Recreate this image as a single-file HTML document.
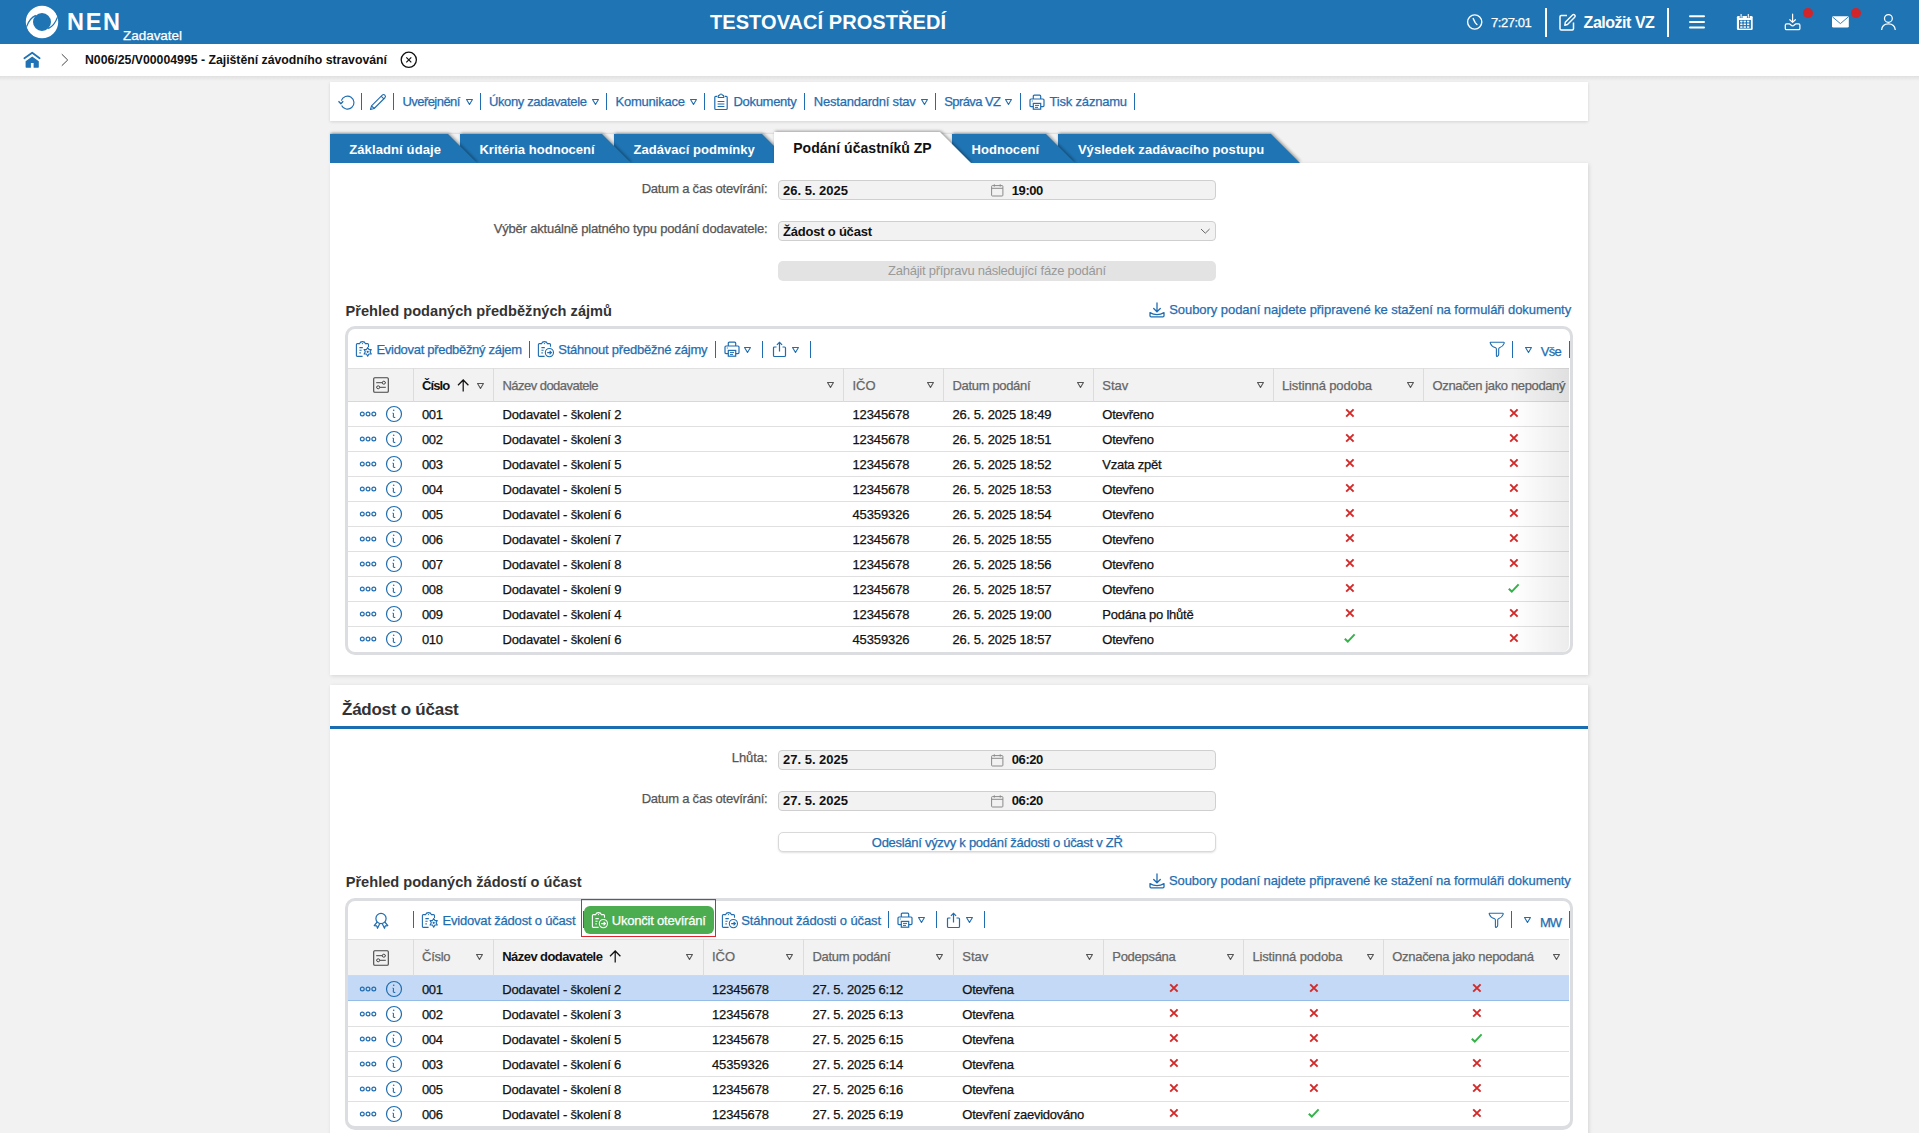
<!DOCTYPE html>
<html><head><meta charset="utf-8"><title>NEN</title>
<style>
html,body{margin:0;padding:0;}
body{width:1919px;height:1133px;overflow:hidden;position:relative;background:#f2f2f2;font-family:"Liberation Sans", sans-serif;}
svg{overflow:visible}
</style></head><body>
<div style="position:absolute;left:0px;top:0px;width:1919px;height:44px;background:#1f74b4"></div><svg style="position:absolute;left:22px;top:2px;" width="40" height="40" viewBox="0 0 40 40" fill="none">
<circle cx="20" cy="20" r="12.6" stroke="#fff" stroke-width="7.2"/>
<path d="M13.8 13.4 C 9.6 15.3, 6.4 19.5, 4.6 24.6" stroke="#1f74b4" stroke-width="1.3"/>
<path d="M4.4 24.4 C 5.2 27.2, 6 29.5, 7.4 32 L 1.5 33 L 1.5 23.5 Z" fill="#1f74b4"/>
<path d="M26.2 26.6 C 30.4 24.7, 33.6 20.5, 35.4 15.4" stroke="#1f74b4" stroke-width="1.3"/>
<path d="M35.6 15.6 C 34.8 12.8, 34 10.5, 32.6 8 L 38.5 7 L 38.5 16.5 Z" fill="#1f74b4"/>
</svg><span style="position:absolute;left:67.00px;top:11.11px;font-size:23.5px;line-height:23.5px;font-weight:700;color:#fff;letter-spacing:1.700px;white-space:nowrap;">NEN</span><span style="position:absolute;left:123.00px;top:28.57px;font-size:13.5px;line-height:13.5px;font-weight:400;color:#fff;letter-spacing:-0.036px;white-space:nowrap;-webkit-text-stroke:0.25px;">Zadavatel</span><span style="position:absolute;left:710.00px;top:12.27px;font-size:20px;line-height:20px;font-weight:700;color:#fff;letter-spacing:0.064px;white-space:nowrap;">TESTOVACÍ PROSTŘEDÍ</span><svg style="position:absolute;left:1466px;top:14px;" width="18" height="18" viewBox="0 0 18 18" fill="none"><circle cx="8.7" cy="8" r="7.1" stroke="#fff" stroke-width="1.4"/><path d="M7.2 4.6 L9.2 8.6 L11 10.6" stroke="#fff" stroke-width="1.4" stroke-linecap="round"/></svg><span style="position:absolute;left:1491.00px;top:16.00px;font-size:13px;line-height:13px;font-weight:400;color:#fff;letter-spacing:-0.446px;white-space:nowrap;-webkit-text-stroke:0.25px;">7:27:01</span><div style="position:absolute;left:1545px;top:8px;width:2px;height:29px;background:#fff"></div><svg style="position:absolute;left:1559px;top:13px;" width="18" height="18" viewBox="0 0 18 18" fill="none"><path d="M8 2.5 H2.2 Q1 2.5 1 3.7 V15.8 Q1 17 2.2 17 H13.3 Q14.5 17 14.5 15.8 V9.5" stroke="#fff" stroke-width="1.5"/><path d="M5.8 12.2 L6.3 9.3 L13.5 2.1 Q14.6 1 15.7 2.1 Q16.8 3.2 15.7 4.3 L8.5 11.5 Z" stroke="#fff" stroke-width="1.4" stroke-linejoin="round"/></svg><span style="position:absolute;left:1583.60px;top:15.06px;font-size:16px;line-height:16px;font-weight:700;color:#fff;letter-spacing:-0.473px;white-space:nowrap;">Založit VZ</span><div style="position:absolute;left:1667px;top:8px;width:2px;height:29px;background:#fff"></div><svg style="position:absolute;left:1688px;top:14px;" width="18" height="16" viewBox="0 0 18 16" fill="none"><path d="M2 2.3 H16 M2 7.9 H16 M2 13.4 H16" stroke="#fff" stroke-width="2" stroke-linecap="round"/></svg><svg style="position:absolute;left:1736px;top:13px;" width="18" height="18" viewBox="0 0 18 18" fill="none"><rect x="0.9" y="2.9" width="15.8" height="14.1" rx="1.3" fill="#fff"/><rect x="3" y="7" width="11.9" height="8.6" fill="#1f74b4"/><path d="M5.1 0.6 V5 M12.3 0.6 V5" stroke="#1f74b4" stroke-width="2.8"/><path d="M5.1 1 V4.8 M12.3 1 V4.8" stroke="#fff" stroke-width="1.1"/><g fill="#fff"><rect x="4.2" y="7.7" width="2.3" height="1.5"/><rect x="7.6" y="7.7" width="2.3" height="1.5"/><rect x="11" y="7.7" width="2.3" height="1.5"/><rect x="4.2" y="10.6" width="2.3" height="1.5"/><rect x="7.6" y="10.6" width="2.3" height="1.5"/><rect x="11" y="10.6" width="2.3" height="1.5"/><rect x="4.2" y="13.3" width="2.3" height="1.5"/><rect x="7.6" y="13.3" width="2.3" height="1.5"/><rect x="11" y="13.3" width="2.3" height="1.5"/></g><path d="M5.35 9.2 V10.6 M8.75 9.2 V10.6 M12.15 9.2 V10.6" stroke="#fff" stroke-width="0.8" opacity="0.7"/></svg><svg style="position:absolute;left:1784px;top:13px;" width="18" height="18" viewBox="0 0 18 18" fill="none"><path d="M8.6 1.2 V9.3 M5.8 6.7 L8.6 9.4 L11.4 6.7" stroke="#fff" stroke-width="1.2" stroke-linecap="round" stroke-linejoin="round"/><path d="M2.6 10.9 H5.2 C6.4 10.9 7 12.8 8.6 12.8 C10.2 12.8 10.8 10.9 12 10.9 H14.6 Q15.9 10.9 15.9 12.2 V15.4 Q15.9 16.7 14.6 16.7 H2.6 Q1.3 16.7 1.3 15.4 V12.2 Q1.3 10.9 2.6 10.9 Z" stroke="#fff" stroke-width="1.25" stroke-linejoin="round"/></svg><div style="position:absolute;left:1803px;top:8px;width:10px;height:10px;background:#d0252b;border-radius:50%"></div><svg style="position:absolute;left:1831px;top:15px;" width="19" height="14" viewBox="0 0 19 14" fill="none"><rect x="1" y="1.3" width="16.8" height="11.3" rx="1.4" fill="#fff"/><path d="M1.6 2 L9.4 8.6 L17.2 2" stroke="#1f74b4" stroke-width="0.9"/></svg><div style="position:absolute;left:1851px;top:8px;width:10px;height:10px;background:#d0252b;border-radius:50%"></div><svg style="position:absolute;left:1880px;top:13px;" width="18" height="18" viewBox="0 0 18 18" fill="none"><circle cx="8.4" cy="5.4" r="3.9" stroke="#fff" stroke-width="1.25"/><path d="M1.6 17 Q2 10.8 8.4 10.8 Q14.8 10.8 15.3 17" stroke="#fff" stroke-width="1.25"/></svg><div style="position:absolute;left:0px;top:44px;width:1919px;height:32px;background:#fff"></div><div style="position:absolute;left:0px;top:76px;width:1919px;height:5px;background:linear-gradient(#e0e0e0,#f2f2f2)"></div><svg style="position:absolute;left:22px;top:50px;" width="20" height="20" viewBox="0 0 20 20" fill="none"><path d="M2.4 8.3 L10.2 2.7 L17.6 8.3" stroke="#1f72b5" stroke-width="1.8" stroke-linecap="round" stroke-linejoin="round"/><path d="M3.6 11.2 L10.2 6.6 L16.8 11.2 V17.1 Q16.8 17.7 16.2 17.7 H11.6 V13 H8.9 V17.7 H4.2 Q3.6 17.7 3.6 17.1 Z" fill="#1f72b5"/></svg><svg style="position:absolute;left:60px;top:53px;" width="10" height="14" viewBox="0 0 10 14" fill="none"><path d="M1.8 1.2 L7.7 7 L1.8 12.7" stroke="#444" stroke-width="1"/></svg><span style="position:absolute;left:85.00px;top:54.39px;font-size:12.3px;line-height:12.3px;font-weight:700;color:#111;letter-spacing:-0.016px;white-space:nowrap;">N006/25/V00004995 - Zajištění závodního stravování</span><svg style="position:absolute;left:399px;top:50px;" width="20" height="20" viewBox="0 0 20 20" fill="none"><circle cx="9.8" cy="9.8" r="7.6" stroke="#111" stroke-width="1.3"/><path d="M7.3 7.3 L12.3 12.3 M12.3 7.3 L7.3 12.3" stroke="#111" stroke-width="1.2"/></svg><div style="position:absolute;left:330px;top:82px;width:1258px;height:39px;background:#fff;box-shadow:0 1px 3px rgba(0,0,0,.13)"></div><svg style="position:absolute;left:337px;top:93px;" width="18" height="18" viewBox="0 0 18 18" fill="none"><path d="M4.3 7.6 A6.5 6.5 0 1 1 4.6 12.4" stroke="#1f6db0" stroke-width="1.15" fill="none"/><path d="M1.5 8.2 L3.9 10.7 L6.2 8.2" stroke="#1f6db0" stroke-width="1.3" fill="none" stroke-linejoin="round"/></svg><div style="position:absolute;left:361px;top:93px;width:1.2px;height:17px;background:#1f6db0"></div><svg style="position:absolute;left:369px;top:93px;" width="18" height="18" viewBox="0 0 18 18" fill="none"><path d="M2.49 12.83 L13.26 2.06 A1.9 1.9 0 0 1 15.94 4.74 L5.17 15.51 L1.5 16.5 Z M12.13 3.19 L14.81 5.87 M2.49 12.83 L5.17 15.51" stroke="#1f6db0" stroke-width="1.1" stroke-linejoin="round" fill="none"/></svg><div style="position:absolute;left:393px;top:93px;width:1.2px;height:17px;background:#1f6db0"></div><span style="position:absolute;left:402.40px;top:95.20px;font-size:13px;line-height:13px;font-weight:400;color:#1f6db0;letter-spacing:-0.541px;white-space:nowrap;-webkit-text-stroke:0.25px;">Uveřejnění</span><svg style="position:absolute;left:464.7px;top:98.2px;" width="9" height="8" viewBox="0 0 9 8" fill="none"><path d="M1.55 1.55 H7.45 L4.5 6.45 Z" stroke="#1f6db0" stroke-width="1.1" stroke-linejoin="round"/></svg><div style="position:absolute;left:480px;top:93px;width:1.2px;height:17px;background:#1f6db0"></div><span style="position:absolute;left:488.90px;top:95.20px;font-size:13px;line-height:13px;font-weight:400;color:#1f6db0;letter-spacing:-0.356px;white-space:nowrap;-webkit-text-stroke:0.25px;">Úkony zadavatele</span><svg style="position:absolute;left:590.5px;top:98.2px;" width="9" height="8" viewBox="0 0 9 8" fill="none"><path d="M1.55 1.55 H7.45 L4.5 6.45 Z" stroke="#1f6db0" stroke-width="1.1" stroke-linejoin="round"/></svg><div style="position:absolute;left:606px;top:93px;width:1.2px;height:17px;background:#1f6db0"></div><span style="position:absolute;left:615.60px;top:95.20px;font-size:13px;line-height:13px;font-weight:400;color:#1f6db0;letter-spacing:-0.238px;white-space:nowrap;-webkit-text-stroke:0.25px;">Komunikace</span><svg style="position:absolute;left:688.5px;top:98.2px;" width="9" height="8" viewBox="0 0 9 8" fill="none"><path d="M1.55 1.55 H7.45 L4.5 6.45 Z" stroke="#1f6db0" stroke-width="1.1" stroke-linejoin="round"/></svg><div style="position:absolute;left:704px;top:93px;width:1.2px;height:17px;background:#1f6db0"></div><svg style="position:absolute;left:713px;top:93px;" width="17" height="18" viewBox="0 0 17 18" fill="none"><path d="M4.3 3.3 H2.8 Q1.8 3.3 1.8 4.3 V15.5 Q1.8 16.5 2.8 16.5 H13.2 Q14.2 16.5 14.2 15.5 V4.3 Q14.2 3.3 13.2 3.3 H11.7" stroke="#1f6db0" stroke-width="1.2"/><path d="M5.3 4.5 V3 Q5.3 2.2 6.1 2.2 H6.6 Q6.8 1 8 1 Q9.2 1 9.4 2.2 H9.9 Q10.7 2.2 10.7 3 V4.5 Z" stroke="#1f6db0" stroke-width="1.1"/><path d="M4.6 8.5 H11.4 M4.6 11 H11.4 M4.6 13.5 H11.4" stroke="#1f6db0" stroke-width="1.2"/></svg><span style="position:absolute;left:733.50px;top:95.20px;font-size:13px;line-height:13px;font-weight:400;color:#1f6db0;letter-spacing:-0.306px;white-space:nowrap;-webkit-text-stroke:0.25px;">Dokumenty</span><div style="position:absolute;left:804px;top:93px;width:1.2px;height:17px;background:#1f6db0"></div><span style="position:absolute;left:813.80px;top:95.20px;font-size:13px;line-height:13px;font-weight:400;color:#1f6db0;letter-spacing:-0.219px;white-space:nowrap;-webkit-text-stroke:0.25px;">Nestandardní stav</span><svg style="position:absolute;left:920px;top:98.2px;" width="9" height="8" viewBox="0 0 9 8" fill="none"><path d="M1.55 1.55 H7.45 L4.5 6.45 Z" stroke="#1f6db0" stroke-width="1.1" stroke-linejoin="round"/></svg><div style="position:absolute;left:935px;top:93px;width:1.2px;height:17px;background:#1f6db0"></div><span style="position:absolute;left:944.20px;top:95.20px;font-size:13px;line-height:13px;font-weight:400;color:#1f6db0;letter-spacing:-0.577px;white-space:nowrap;-webkit-text-stroke:0.25px;">Správa VZ</span><svg style="position:absolute;left:1004px;top:98.2px;" width="9" height="8" viewBox="0 0 9 8" fill="none"><path d="M1.55 1.55 H7.45 L4.5 6.45 Z" stroke="#1f6db0" stroke-width="1.1" stroke-linejoin="round"/></svg><div style="position:absolute;left:1020px;top:93px;width:1.2px;height:17px;background:#1f6db0"></div><svg style="position:absolute;left:1029px;top:94px;" width="16" height="16" viewBox="0 0 16 16" fill="none"><path d="M4.3 5 V2.2 Q4.3 1.2 5.3 1.2 H10.7 Q11.7 1.2 11.7 2.2 V5" stroke="#1f6db0" stroke-width="1.2"/><path d="M4.3 12.6 H2 Q1 12.6 1 11.6 V6 Q1 5 2 5 H14 Q15 5 15 6 V11.6 Q15 12.6 14 12.6 H11.7" stroke="#1f6db0" stroke-width="1.2"/><rect x="4.3" y="9.4" width="7.4" height="5.8" stroke="#1f6db0" stroke-width="1.2"/><path d="M2.8 7 H3.8 M6 11.4 H10 M6 13.4 H9" stroke="#1f6db0" stroke-width="1"/></svg><span style="position:absolute;left:1049.60px;top:95.20px;font-size:13px;line-height:13px;font-weight:400;color:#1f6db0;letter-spacing:-0.201px;white-space:nowrap;-webkit-text-stroke:0.25px;">Tisk záznamu</span><div style="position:absolute;left:1134px;top:93px;width:1.2px;height:17px;background:#1f6db0"></div><div style="position:absolute;left:330px;top:132px;width:941px;height:2px;background:linear-gradient(rgba(0,0,0,0),rgba(0,0,0,.10))"></div><svg style="position:absolute;left:330px;top:134px;z-index:10;filter:drop-shadow(1.5px -0.5px 1.5px rgba(0,0,0,.35));clip-path:inset(-6px -6px 0 -6px);" width="155" height="29" viewBox="0 0 155 29"><polygon points="0,0 118,0 147,29 0,29" fill="#1f74b4"/></svg><svg style="position:absolute;left:460px;top:134px;z-index:9;filter:drop-shadow(1.5px -0.5px 1.5px rgba(0,0,0,.35));clip-path:inset(-6px -6px 0 -6px);" width="179" height="29" viewBox="0 0 179 29"><polygon points="0,0 142,0 171,29 0,29" fill="#1f74b4"/></svg><svg style="position:absolute;left:614px;top:134px;z-index:8;filter:drop-shadow(1.5px -0.5px 1.5px rgba(0,0,0,.35));clip-path:inset(-6px -6px 0 -6px);" width="185" height="29" viewBox="0 0 185 29"><polygon points="0,0 148,0 177,29 0,29" fill="#1f74b4"/></svg><svg style="position:absolute;left:774px;top:132px;z-index:12;filter:drop-shadow(1.5px -0.5px 1.5px rgba(0,0,0,.35));clip-path:inset(-6px -6px 0 -6px);" width="205" height="31" viewBox="0 0 205 31"><polygon points="0,0 166,0 197,31 0,31" fill="#fff"/></svg><svg style="position:absolute;left:952px;top:134px;z-index:7;filter:drop-shadow(1.5px -0.5px 1.5px rgba(0,0,0,.35));clip-path:inset(-6px -6px 0 -6px);" width="131" height="29" viewBox="0 0 131 29"><polygon points="0,0 94,0 123,29 0,29" fill="#1f74b4"/></svg><svg style="position:absolute;left:1058px;top:134px;z-index:6;filter:drop-shadow(1.5px -0.5px 1.5px rgba(0,0,0,.35));clip-path:inset(-6px -6px 0 -6px);" width="250" height="29" viewBox="0 0 250 29"><polygon points="0,0 213,0 242,29 0,29" fill="#1f74b4"/></svg><span style="position:absolute;left:349.20px;top:142.80px;font-size:13px;line-height:13px;font-weight:700;color:#fff;letter-spacing:0.115px;white-space:nowrap;z-index:20;">Základní údaje</span><span style="position:absolute;left:479.40px;top:142.80px;font-size:13px;line-height:13px;font-weight:700;color:#fff;letter-spacing:0.027px;white-space:nowrap;z-index:20;">Kritéria hodnocení</span><span style="position:absolute;left:633.40px;top:142.80px;font-size:13px;line-height:13px;font-weight:700;color:#fff;letter-spacing:0.047px;white-space:nowrap;z-index:20;">Zadávací podmínky</span><span style="position:absolute;left:793.20px;top:140.95px;font-size:14px;line-height:14px;font-weight:700;color:#111;letter-spacing:0.045px;white-space:nowrap;z-index:20;">Podání účastníků ZP</span><span style="position:absolute;left:971.50px;top:142.80px;font-size:13px;line-height:13px;font-weight:700;color:#fff;letter-spacing:0.042px;white-space:nowrap;z-index:20;">Hodnocení</span><span style="position:absolute;left:1077.90px;top:142.80px;font-size:13px;line-height:13px;font-weight:700;color:#fff;letter-spacing:0.052px;white-space:nowrap;z-index:20;">Výsledek zadávacího postupu</span><div style="position:absolute;left:330px;top:163px;width:1258px;height:512px;background:#fff;box-shadow:1px 1px 4px rgba(0,0,0,.12);z-index:5"></div><div style="position:absolute;left:0;top:0;width:1919px;height:1133px;z-index:15"><span style="position:absolute;left:641.70px;top:181.70px;font-size:13px;line-height:13px;font-weight:400;color:#555;letter-spacing:-0.228px;white-space:nowrap;-webkit-text-stroke:0.25px;">Datum a čas otevírání:</span><div style="position:absolute;left:778px;top:180.3px;width:438px;height:20px;background:#f2f2f2;border:1px solid #cfcfcf;border-radius:4px;box-sizing:border-box"></div><span style="position:absolute;left:783.00px;top:183.80px;font-size:13px;line-height:13px;font-weight:700;color:#111;letter-spacing:-0.006px;white-space:nowrap;">26. 5. 2025</span><svg style="position:absolute;left:990.5px;top:184.3px;" width="13" height="13" viewBox="0 0 13 13" fill="none"><rect x="0.6" y="1.6" width="11.3" height="10.4" rx="0.8" stroke="#8a8a8a" stroke-width="1"/><path d="M0.6 4.3 H11.9 M3.3 0.3 V2.6 M9.2 0.3 V2.6" stroke="#8a8a8a" stroke-width="1"/></svg><span style="position:absolute;left:1011.80px;top:183.80px;font-size:13px;line-height:13px;font-weight:700;color:#111;letter-spacing:-0.437px;white-space:nowrap;">19:00</span><span style="position:absolute;left:493.70px;top:222.30px;font-size:13px;line-height:13px;font-weight:400;color:#555;letter-spacing:-0.187px;white-space:nowrap;-webkit-text-stroke:0.25px;">Výběr aktuálně platného typu podání dodavatele:</span><div style="position:absolute;left:778px;top:221.2px;width:438px;height:20px;background:#f2f2f2;border:1px solid #cfcfcf;border-radius:4px;box-sizing:border-box"></div><span style="position:absolute;left:783.00px;top:224.50px;font-size:13px;line-height:13px;font-weight:700;color:#111;letter-spacing:-0.210px;white-space:nowrap;">Žádost o účast</span><svg style="position:absolute;left:1200px;top:228px;" width="11" height="7" viewBox="0 0 11 7" fill="none"><path d="M1 1 L5.3 5.2 L9.6 1" stroke="#666" stroke-width="1"/></svg><div style="position:absolute;left:778px;top:261px;width:438px;height:20px;background:#e3e3e3;border-radius:5px"></div><span style="position:absolute;left:888.00px;top:264.30px;font-size:13px;line-height:13px;font-weight:400;color:#999;letter-spacing:-0.247px;white-space:nowrap;">Zahájit přípravu následující fáze podání</span><span style="position:absolute;left:345.50px;top:304.04px;font-size:14.6px;line-height:14.6px;font-weight:700;color:#333;letter-spacing:0.016px;white-space:nowrap;">Přehled podaných předběžných zájmů</span><svg style="position:absolute;left:1149px;top:301.5px;" width="16" height="16" viewBox="0 0 16 16" fill="none"><path d="M8 1 V9.6 M4.7 6.5 L8 9.8 L11.3 6.5" stroke="#1f6db0" stroke-width="1.3" stroke-linecap="round"/><path d="M1 10.6 V13.8 Q1 14.9 2.1 14.9 H13.9 Q15 14.9 15 13.8 V10.6 Q11.8 12.6 8 12.6 Q4.2 12.6 1 10.6 Z" stroke="#1f6db0" stroke-width="1.3" stroke-linejoin="round"/></svg><span style="position:absolute;left:1169.20px;top:302.50px;font-size:13px;line-height:13px;font-weight:400;color:#1f6db0;letter-spacing:-0.052px;white-space:nowrap;-webkit-text-stroke:0.25px;">Soubory podaní najdete připravené ke stažení na formuláři dokumenty</span><div style="position:absolute;left:345px;top:326px;width:1228px;height:329px;border:3px solid #dcdde0;border-bottom-width:3px;border-radius:10px;box-sizing:border-box"></div><svg style="position:absolute;left:355px;top:340.5px;" width="17" height="17" viewBox="0 0 17 17" fill="none"><path d="M7.6 15.4 H2.4 Q1.4 15.4 1.4 14.4 V3.6 Q1.4 2.6 2.4 2.6 H4.6 Q5.2 0.6 7.5 0.6 Q9.8 0.6 10.4 2.6 H12.5 Q13.5 2.6 13.5 3.6 V6" stroke="#1f6db0" stroke-width="1.1"/>
<circle cx="7.5" cy="2.6" r="0.6" fill="#1f6db0"/>
<path d="M4.4 6.6 H7.8 M4.4 9.3 H6.6 M4.4 11.9 H5.8" stroke="#1f6db0" stroke-width="1.1"/>
<path d="M12.7 6.5 L13.9 8.6 L16.3 8.6 L15.1 10.8 L16.3 13 L13.9 13 L12.7 15.2 L11.5 13 L9.1 13 L10.3 10.8 L9.1 8.6 L11.5 8.6 Z" stroke="#1f6db0" stroke-width="1.1" stroke-linejoin="round"/>
<circle cx="12.7" cy="10.8" r="1.1" fill="#1f6db0"/></svg><span style="position:absolute;left:376.50px;top:343.20px;font-size:13px;line-height:13px;font-weight:400;color:#1f6db0;letter-spacing:-0.303px;white-space:nowrap;-webkit-text-stroke:0.25px;">Evidovat předběžný zájem</span><div style="position:absolute;left:529px;top:341px;width:1.2px;height:16.5px;background:#1f6db0"></div><svg style="position:absolute;left:537px;top:340.5px;" width="17" height="17" viewBox="0 0 17 17" fill="none"><path d="M7.6 15.4 H2.4 Q1.4 15.4 1.4 14.4 V3.6 Q1.4 2.6 2.4 2.6 H4.6 Q5.2 0.6 7.5 0.6 Q9.8 0.6 10.4 2.6 H12.5 Q13.5 2.6 13.5 3.6 V5.8" stroke="#1f6db0" stroke-width="1.1"/>
<circle cx="7.5" cy="2.6" r="0.6" fill="#1f6db0"/>
<path d="M4.4 6.6 H7.8 M4.4 9.3 H6.6 M4.4 11.9 H5.8" stroke="#1f6db0" stroke-width="1.1"/>
<circle cx="12.4" cy="11.6" r="4.1" stroke="#1f6db0" stroke-width="1.1"/>
<path d="M10.2 11.6 H14.4 M12.6 9.9 L14.4 11.6 L12.6 13.3" stroke="#1f6db0" stroke-width="1.1"/></svg><span style="position:absolute;left:558.20px;top:343.20px;font-size:13px;line-height:13px;font-weight:400;color:#1f6db0;letter-spacing:-0.228px;white-space:nowrap;-webkit-text-stroke:0.25px;">Stáhnout předběžné zájmy</span><div style="position:absolute;left:715px;top:341px;width:1.2px;height:16.5px;background:#1f6db0"></div><svg style="position:absolute;left:723.5px;top:341px;" width="16" height="16" viewBox="0 0 16 16" fill="none"><path d="M4.3 5 V2.2 Q4.3 1.2 5.3 1.2 H10.7 Q11.7 1.2 11.7 2.2 V5" stroke="#1f6db0" stroke-width="1.2"/><path d="M4.3 12.6 H2 Q1 12.6 1 11.6 V6 Q1 5 2 5 H14 Q15 5 15 6 V11.6 Q15 12.6 14 12.6 H11.7" stroke="#1f6db0" stroke-width="1.2"/><rect x="4.3" y="9.4" width="7.4" height="5.8" stroke="#1f6db0" stroke-width="1.2"/><path d="M2.8 7 H3.8 M6 11.4 H10 M6 13.4 H9" stroke="#1f6db0" stroke-width="1"/></svg><svg style="position:absolute;left:743.3px;top:345.5px;" width="9" height="8" viewBox="0 0 9 8" fill="none"><path d="M1.55 1.55 H7.45 L4.5 6.45 Z" stroke="#1f6db0" stroke-width="1.1" stroke-linejoin="round"/></svg><div style="position:absolute;left:762px;top:341px;width:1.2px;height:16.5px;background:#1f6db0"></div><svg style="position:absolute;left:772px;top:340.5px;" width="15" height="17" viewBox="0 0 15 17" fill="none"><path d="M4.5 6 H2.5 Q1.5 6 1.5 7 V14.5 Q1.5 15.5 2.5 15.5 H12.5 Q13.5 15.5 13.5 14.5 V7 Q13.5 6 12.5 6 H10.5" stroke="#1f6db0" stroke-width="1.2"/><path d="M7.5 10.5 V1.3 M4.9 3.9 L7.5 1.3 L10.1 3.9" stroke="#1f6db0" stroke-width="1.2"/></svg><svg style="position:absolute;left:791px;top:345.5px;" width="9" height="8" viewBox="0 0 9 8" fill="none"><path d="M1.55 1.55 H7.45 L4.5 6.45 Z" stroke="#1f6db0" stroke-width="1.1" stroke-linejoin="round"/></svg><div style="position:absolute;left:810px;top:341px;width:1.2px;height:16.5px;background:#1f6db0"></div><svg style="position:absolute;left:1488.5px;top:341px;" width="17" height="17" viewBox="0 0 17 17" fill="none"><path d="M1.3 1.3 H14.7 Q15.6 1.3 15 2.6 Q14 5.5 10.5 6.8 Q9.7 7.1 9.7 8 V13.3 Q9.7 14.6 8.4 15.3 Q7.4 15.8 7.4 14.6 V8 Q7.4 7.1 6.6 6.8 Q2.5 5.5 1.5 2.6 Q1 1.3 1.3 1.3 Z" stroke="#1f6db0" stroke-width="1.1" stroke-linejoin="round"/></svg><div style="position:absolute;left:1512px;top:341px;width:1.2px;height:16.5px;background:#1f6db0"></div><svg style="position:absolute;left:1523.8px;top:345.5px;" width="9" height="8" viewBox="0 0 9 8" fill="none"><path d="M1.55 1.55 H7.45 L4.5 6.45 Z" stroke="#1f6db0" stroke-width="1.1" stroke-linejoin="round"/></svg><span style="position:absolute;left:1540.80px;top:344.60px;font-size:13px;line-height:13px;font-weight:400;color:#1f6db0;letter-spacing:-0.700px;white-space:nowrap;-webkit-text-stroke:0.25px;">Vše</span><div style="position:absolute;left:1569px;top:341px;width:1.2px;height:16.5px;background:#1f6db0"></div><div style="position:absolute;left:348px;top:367.5px;width:1221px;height:34.5px;background:#f2f2f2;border-top:1px solid #e0e0e0;border-bottom:1px solid #d8d8d8;box-sizing:border-box"></div><div style="position:absolute;left:412.8px;top:367.5px;width:1px;height:34.5px;background:#dcdcdc"></div><div style="position:absolute;left:492.9px;top:367.5px;width:1px;height:34.5px;background:#dcdcdc"></div><div style="position:absolute;left:843.0px;top:367.5px;width:1px;height:34.5px;background:#dcdcdc"></div><div style="position:absolute;left:943.0px;top:367.5px;width:1px;height:34.5px;background:#dcdcdc"></div><div style="position:absolute;left:1093.0px;top:367.5px;width:1px;height:34.5px;background:#dcdcdc"></div><div style="position:absolute;left:1273.25px;top:367.5px;width:1px;height:34.5px;background:#dcdcdc"></div><div style="position:absolute;left:1422.8px;top:367.5px;width:1px;height:34.5px;background:#dcdcdc"></div><svg style="position:absolute;left:373px;top:377px;" width="16" height="16" viewBox="0 0 16 16" fill="none"><rect x="0.7" y="0.7" width="14.6" height="14.6" rx="1" stroke="#444" stroke-width="1.1"/><path d="M3.2 5.7 H12.8 M3.2 10.3 H12.8" stroke="#444" stroke-width="1"/><circle cx="10.8" cy="5.7" r="1.5" fill="#f2f2f2" stroke="#444" stroke-width="1"/><circle cx="5.2" cy="10.3" r="1.5" fill="#f2f2f2" stroke="#444" stroke-width="1"/></svg><span style="position:absolute;left:422.00px;top:379.00px;font-size:13px;line-height:13px;font-weight:700;color:#111;letter-spacing:-0.871px;white-space:nowrap;">Číslo</span><svg style="position:absolute;left:456.5px;top:378.8px;" width="13" height="13" viewBox="0 0 13 13" fill="none"><path d="M6.2 12.4 V1.2 M1 6.2 L6.2 1 L11.4 6.2" stroke="#111" stroke-width="1.25"/></svg><svg style="position:absolute;left:475.5px;top:381.5px;" width="9" height="8" viewBox="0 0 9 8" fill="none"><path d="M1.55 1.55 H7.45 L4.5 6.45 Z" stroke="#555" stroke-width="1.1" stroke-linejoin="round"/></svg><span style="position:absolute;left:502.50px;top:379.00px;font-size:13px;line-height:13px;font-weight:400;color:#666;letter-spacing:-0.538px;white-space:nowrap;-webkit-text-stroke:0.25px;">Název dodavatele</span><svg style="position:absolute;left:826px;top:381px;" width="9" height="8" viewBox="0 0 9 8" fill="none"><path d="M1.55 1.55 H7.45 L4.5 6.45 Z" stroke="#555" stroke-width="1.1" stroke-linejoin="round"/></svg><span style="position:absolute;left:852.50px;top:379.00px;font-size:13px;line-height:13px;font-weight:400;color:#666;letter-spacing:0.000px;white-space:nowrap;-webkit-text-stroke:0.25px;">IČO</span><svg style="position:absolute;left:926px;top:381px;" width="9" height="8" viewBox="0 0 9 8" fill="none"><path d="M1.55 1.55 H7.45 L4.5 6.45 Z" stroke="#555" stroke-width="1.1" stroke-linejoin="round"/></svg><span style="position:absolute;left:952.50px;top:379.00px;font-size:13px;line-height:13px;font-weight:400;color:#666;letter-spacing:-0.333px;white-space:nowrap;-webkit-text-stroke:0.25px;">Datum podání</span><svg style="position:absolute;left:1076px;top:381px;" width="9" height="8" viewBox="0 0 9 8" fill="none"><path d="M1.55 1.55 H7.45 L4.5 6.45 Z" stroke="#555" stroke-width="1.1" stroke-linejoin="round"/></svg><span style="position:absolute;left:1102.30px;top:379.00px;font-size:13px;line-height:13px;font-weight:400;color:#666;letter-spacing:0.000px;white-space:nowrap;-webkit-text-stroke:0.25px;">Stav</span><svg style="position:absolute;left:1255.7px;top:381px;" width="9" height="8" viewBox="0 0 9 8" fill="none"><path d="M1.55 1.55 H7.45 L4.5 6.45 Z" stroke="#555" stroke-width="1.1" stroke-linejoin="round"/></svg><span style="position:absolute;left:1282.00px;top:379.00px;font-size:13px;line-height:13px;font-weight:400;color:#666;letter-spacing:-0.129px;white-space:nowrap;-webkit-text-stroke:0.25px;">Listinná podoba</span><svg style="position:absolute;left:1405.7px;top:381px;" width="9" height="8" viewBox="0 0 9 8" fill="none"><path d="M1.55 1.55 H7.45 L4.5 6.45 Z" stroke="#555" stroke-width="1.1" stroke-linejoin="round"/></svg><span style="position:absolute;left:1432.50px;top:379.00px;font-size:13px;line-height:13px;font-weight:400;color:#666;letter-spacing:-0.361px;white-space:nowrap;-webkit-text-stroke:0.25px;">Označen jako nepodaný</span><div style="position:absolute;left:348px;top:425.5px;width:1221px;height:1px;background:#e0e0e0"></div><svg style="position:absolute;left:358px;top:409.9px;" width="20" height="8" viewBox="0 0 20 8" fill="none"><circle cx="4.3" cy="4" r="1.9" stroke="#1f6db0" stroke-width="1.2"/><circle cx="10" cy="4" r="1.9" stroke="#1f6db0" stroke-width="1.2"/><circle cx="15.8" cy="4" r="1.9" stroke="#1f6db0" stroke-width="1.2"/></svg><svg style="position:absolute;left:385px;top:404.9px;" width="18" height="18" viewBox="0 0 18 18" fill="none"><circle cx="9" cy="9" r="7.5" stroke="#1f6db0" stroke-width="1.2"/><circle cx="8.7" cy="5.2" r="0.8" fill="#1f6db0"/><path d="M7.5 8.3 Q8.6 7.9 8.5 9.4 L8.3 11.2 Q8.4 12.7 10.3 12.5" stroke="#1f6db0" stroke-width="1.1" fill="none"/></svg><span style="position:absolute;left:422.00px;top:408.00px;font-size:13px;line-height:13px;font-weight:400;color:#111;letter-spacing:-0.380px;white-space:nowrap;-webkit-text-stroke:0.25px;">001</span><span style="position:absolute;left:502.50px;top:408.00px;font-size:13px;line-height:13px;font-weight:400;color:#111;letter-spacing:-0.156px;white-space:nowrap;-webkit-text-stroke:0.25px;">Dodavatel - školení 2</span><span style="position:absolute;left:852.50px;top:408.00px;font-size:13px;line-height:13px;font-weight:400;color:#111;letter-spacing:-0.120px;white-space:nowrap;-webkit-text-stroke:0.25px;">12345678</span><span style="position:absolute;left:952.50px;top:408.00px;font-size:13px;line-height:13px;font-weight:400;color:#111;letter-spacing:-0.138px;white-space:nowrap;-webkit-text-stroke:0.25px;">26. 5. 2025 18:49</span><span style="position:absolute;left:1102.30px;top:408.00px;font-size:13px;line-height:13px;font-weight:400;color:#111;letter-spacing:-0.267px;white-space:nowrap;-webkit-text-stroke:0.25px;">Otevřeno</span><svg style="position:absolute;left:1344.5px;top:408.4px;" width="10" height="10" viewBox="0 0 10 10" fill="none"><path d="M1.2 1.4 L8.6 8.6 M8.6 1.4 L1.2 8.6" stroke="#d32a2a" stroke-width="2"/></svg><svg style="position:absolute;left:1509px;top:408.4px;" width="10" height="10" viewBox="0 0 10 10" fill="none"><path d="M1.2 1.4 L8.6 8.6 M8.6 1.4 L1.2 8.6" stroke="#d32a2a" stroke-width="2"/></svg><div style="position:absolute;left:348px;top:450.5px;width:1221px;height:1px;background:#e0e0e0"></div><svg style="position:absolute;left:358px;top:434.9px;" width="20" height="8" viewBox="0 0 20 8" fill="none"><circle cx="4.3" cy="4" r="1.9" stroke="#1f6db0" stroke-width="1.2"/><circle cx="10" cy="4" r="1.9" stroke="#1f6db0" stroke-width="1.2"/><circle cx="15.8" cy="4" r="1.9" stroke="#1f6db0" stroke-width="1.2"/></svg><svg style="position:absolute;left:385px;top:429.9px;" width="18" height="18" viewBox="0 0 18 18" fill="none"><circle cx="9" cy="9" r="7.5" stroke="#1f6db0" stroke-width="1.2"/><circle cx="8.7" cy="5.2" r="0.8" fill="#1f6db0"/><path d="M7.5 8.3 Q8.6 7.9 8.5 9.4 L8.3 11.2 Q8.4 12.7 10.3 12.5" stroke="#1f6db0" stroke-width="1.1" fill="none"/></svg><span style="position:absolute;left:422.00px;top:433.00px;font-size:13px;line-height:13px;font-weight:400;color:#111;letter-spacing:-0.380px;white-space:nowrap;-webkit-text-stroke:0.25px;">002</span><span style="position:absolute;left:502.50px;top:433.00px;font-size:13px;line-height:13px;font-weight:400;color:#111;letter-spacing:-0.156px;white-space:nowrap;-webkit-text-stroke:0.25px;">Dodavatel - školení 3</span><span style="position:absolute;left:852.50px;top:433.00px;font-size:13px;line-height:13px;font-weight:400;color:#111;letter-spacing:-0.120px;white-space:nowrap;-webkit-text-stroke:0.25px;">12345678</span><span style="position:absolute;left:952.50px;top:433.00px;font-size:13px;line-height:13px;font-weight:400;color:#111;letter-spacing:-0.138px;white-space:nowrap;-webkit-text-stroke:0.25px;">26. 5. 2025 18:51</span><span style="position:absolute;left:1102.30px;top:433.00px;font-size:13px;line-height:13px;font-weight:400;color:#111;letter-spacing:-0.267px;white-space:nowrap;-webkit-text-stroke:0.25px;">Otevřeno</span><svg style="position:absolute;left:1344.5px;top:433.4px;" width="10" height="10" viewBox="0 0 10 10" fill="none"><path d="M1.2 1.4 L8.6 8.6 M8.6 1.4 L1.2 8.6" stroke="#d32a2a" stroke-width="2"/></svg><svg style="position:absolute;left:1509px;top:433.4px;" width="10" height="10" viewBox="0 0 10 10" fill="none"><path d="M1.2 1.4 L8.6 8.6 M8.6 1.4 L1.2 8.6" stroke="#d32a2a" stroke-width="2"/></svg><div style="position:absolute;left:348px;top:475.5px;width:1221px;height:1px;background:#e0e0e0"></div><svg style="position:absolute;left:358px;top:459.9px;" width="20" height="8" viewBox="0 0 20 8" fill="none"><circle cx="4.3" cy="4" r="1.9" stroke="#1f6db0" stroke-width="1.2"/><circle cx="10" cy="4" r="1.9" stroke="#1f6db0" stroke-width="1.2"/><circle cx="15.8" cy="4" r="1.9" stroke="#1f6db0" stroke-width="1.2"/></svg><svg style="position:absolute;left:385px;top:454.9px;" width="18" height="18" viewBox="0 0 18 18" fill="none"><circle cx="9" cy="9" r="7.5" stroke="#1f6db0" stroke-width="1.2"/><circle cx="8.7" cy="5.2" r="0.8" fill="#1f6db0"/><path d="M7.5 8.3 Q8.6 7.9 8.5 9.4 L8.3 11.2 Q8.4 12.7 10.3 12.5" stroke="#1f6db0" stroke-width="1.1" fill="none"/></svg><span style="position:absolute;left:422.00px;top:458.00px;font-size:13px;line-height:13px;font-weight:400;color:#111;letter-spacing:-0.380px;white-space:nowrap;-webkit-text-stroke:0.25px;">003</span><span style="position:absolute;left:502.50px;top:458.00px;font-size:13px;line-height:13px;font-weight:400;color:#111;letter-spacing:-0.156px;white-space:nowrap;-webkit-text-stroke:0.25px;">Dodavatel - školení 5</span><span style="position:absolute;left:852.50px;top:458.00px;font-size:13px;line-height:13px;font-weight:400;color:#111;letter-spacing:-0.120px;white-space:nowrap;-webkit-text-stroke:0.25px;">12345678</span><span style="position:absolute;left:952.50px;top:458.00px;font-size:13px;line-height:13px;font-weight:400;color:#111;letter-spacing:-0.138px;white-space:nowrap;-webkit-text-stroke:0.25px;">26. 5. 2025 18:52</span><span style="position:absolute;left:1102.30px;top:458.00px;font-size:13px;line-height:13px;font-weight:400;color:#111;letter-spacing:-0.239px;white-space:nowrap;-webkit-text-stroke:0.25px;">Vzata zpět</span><svg style="position:absolute;left:1344.5px;top:458.4px;" width="10" height="10" viewBox="0 0 10 10" fill="none"><path d="M1.2 1.4 L8.6 8.6 M8.6 1.4 L1.2 8.6" stroke="#d32a2a" stroke-width="2"/></svg><svg style="position:absolute;left:1509px;top:458.4px;" width="10" height="10" viewBox="0 0 10 10" fill="none"><path d="M1.2 1.4 L8.6 8.6 M8.6 1.4 L1.2 8.6" stroke="#d32a2a" stroke-width="2"/></svg><div style="position:absolute;left:348px;top:500.5px;width:1221px;height:1px;background:#e0e0e0"></div><svg style="position:absolute;left:358px;top:484.9px;" width="20" height="8" viewBox="0 0 20 8" fill="none"><circle cx="4.3" cy="4" r="1.9" stroke="#1f6db0" stroke-width="1.2"/><circle cx="10" cy="4" r="1.9" stroke="#1f6db0" stroke-width="1.2"/><circle cx="15.8" cy="4" r="1.9" stroke="#1f6db0" stroke-width="1.2"/></svg><svg style="position:absolute;left:385px;top:479.9px;" width="18" height="18" viewBox="0 0 18 18" fill="none"><circle cx="9" cy="9" r="7.5" stroke="#1f6db0" stroke-width="1.2"/><circle cx="8.7" cy="5.2" r="0.8" fill="#1f6db0"/><path d="M7.5 8.3 Q8.6 7.9 8.5 9.4 L8.3 11.2 Q8.4 12.7 10.3 12.5" stroke="#1f6db0" stroke-width="1.1" fill="none"/></svg><span style="position:absolute;left:422.00px;top:483.00px;font-size:13px;line-height:13px;font-weight:400;color:#111;letter-spacing:-0.380px;white-space:nowrap;-webkit-text-stroke:0.25px;">004</span><span style="position:absolute;left:502.50px;top:483.00px;font-size:13px;line-height:13px;font-weight:400;color:#111;letter-spacing:-0.156px;white-space:nowrap;-webkit-text-stroke:0.25px;">Dodavatel - školení 5</span><span style="position:absolute;left:852.50px;top:483.00px;font-size:13px;line-height:13px;font-weight:400;color:#111;letter-spacing:-0.120px;white-space:nowrap;-webkit-text-stroke:0.25px;">12345678</span><span style="position:absolute;left:952.50px;top:483.00px;font-size:13px;line-height:13px;font-weight:400;color:#111;letter-spacing:-0.138px;white-space:nowrap;-webkit-text-stroke:0.25px;">26. 5. 2025 18:53</span><span style="position:absolute;left:1102.30px;top:483.00px;font-size:13px;line-height:13px;font-weight:400;color:#111;letter-spacing:-0.267px;white-space:nowrap;-webkit-text-stroke:0.25px;">Otevřeno</span><svg style="position:absolute;left:1344.5px;top:483.4px;" width="10" height="10" viewBox="0 0 10 10" fill="none"><path d="M1.2 1.4 L8.6 8.6 M8.6 1.4 L1.2 8.6" stroke="#d32a2a" stroke-width="2"/></svg><svg style="position:absolute;left:1509px;top:483.4px;" width="10" height="10" viewBox="0 0 10 10" fill="none"><path d="M1.2 1.4 L8.6 8.6 M8.6 1.4 L1.2 8.6" stroke="#d32a2a" stroke-width="2"/></svg><div style="position:absolute;left:348px;top:525.5px;width:1221px;height:1px;background:#e0e0e0"></div><svg style="position:absolute;left:358px;top:509.9px;" width="20" height="8" viewBox="0 0 20 8" fill="none"><circle cx="4.3" cy="4" r="1.9" stroke="#1f6db0" stroke-width="1.2"/><circle cx="10" cy="4" r="1.9" stroke="#1f6db0" stroke-width="1.2"/><circle cx="15.8" cy="4" r="1.9" stroke="#1f6db0" stroke-width="1.2"/></svg><svg style="position:absolute;left:385px;top:504.9px;" width="18" height="18" viewBox="0 0 18 18" fill="none"><circle cx="9" cy="9" r="7.5" stroke="#1f6db0" stroke-width="1.2"/><circle cx="8.7" cy="5.2" r="0.8" fill="#1f6db0"/><path d="M7.5 8.3 Q8.6 7.9 8.5 9.4 L8.3 11.2 Q8.4 12.7 10.3 12.5" stroke="#1f6db0" stroke-width="1.1" fill="none"/></svg><span style="position:absolute;left:422.00px;top:508.00px;font-size:13px;line-height:13px;font-weight:400;color:#111;letter-spacing:-0.380px;white-space:nowrap;-webkit-text-stroke:0.25px;">005</span><span style="position:absolute;left:502.50px;top:508.00px;font-size:13px;line-height:13px;font-weight:400;color:#111;letter-spacing:-0.156px;white-space:nowrap;-webkit-text-stroke:0.25px;">Dodavatel - školení 6</span><span style="position:absolute;left:852.50px;top:508.00px;font-size:13px;line-height:13px;font-weight:400;color:#111;letter-spacing:-0.120px;white-space:nowrap;-webkit-text-stroke:0.25px;">45359326</span><span style="position:absolute;left:952.50px;top:508.00px;font-size:13px;line-height:13px;font-weight:400;color:#111;letter-spacing:-0.138px;white-space:nowrap;-webkit-text-stroke:0.25px;">26. 5. 2025 18:54</span><span style="position:absolute;left:1102.30px;top:508.00px;font-size:13px;line-height:13px;font-weight:400;color:#111;letter-spacing:-0.267px;white-space:nowrap;-webkit-text-stroke:0.25px;">Otevřeno</span><svg style="position:absolute;left:1344.5px;top:508.4px;" width="10" height="10" viewBox="0 0 10 10" fill="none"><path d="M1.2 1.4 L8.6 8.6 M8.6 1.4 L1.2 8.6" stroke="#d32a2a" stroke-width="2"/></svg><svg style="position:absolute;left:1509px;top:508.4px;" width="10" height="10" viewBox="0 0 10 10" fill="none"><path d="M1.2 1.4 L8.6 8.6 M8.6 1.4 L1.2 8.6" stroke="#d32a2a" stroke-width="2"/></svg><div style="position:absolute;left:348px;top:550.5px;width:1221px;height:1px;background:#e0e0e0"></div><svg style="position:absolute;left:358px;top:534.9px;" width="20" height="8" viewBox="0 0 20 8" fill="none"><circle cx="4.3" cy="4" r="1.9" stroke="#1f6db0" stroke-width="1.2"/><circle cx="10" cy="4" r="1.9" stroke="#1f6db0" stroke-width="1.2"/><circle cx="15.8" cy="4" r="1.9" stroke="#1f6db0" stroke-width="1.2"/></svg><svg style="position:absolute;left:385px;top:529.9px;" width="18" height="18" viewBox="0 0 18 18" fill="none"><circle cx="9" cy="9" r="7.5" stroke="#1f6db0" stroke-width="1.2"/><circle cx="8.7" cy="5.2" r="0.8" fill="#1f6db0"/><path d="M7.5 8.3 Q8.6 7.9 8.5 9.4 L8.3 11.2 Q8.4 12.7 10.3 12.5" stroke="#1f6db0" stroke-width="1.1" fill="none"/></svg><span style="position:absolute;left:422.00px;top:533.00px;font-size:13px;line-height:13px;font-weight:400;color:#111;letter-spacing:-0.380px;white-space:nowrap;-webkit-text-stroke:0.25px;">006</span><span style="position:absolute;left:502.50px;top:533.00px;font-size:13px;line-height:13px;font-weight:400;color:#111;letter-spacing:-0.156px;white-space:nowrap;-webkit-text-stroke:0.25px;">Dodavatel - školení 7</span><span style="position:absolute;left:852.50px;top:533.00px;font-size:13px;line-height:13px;font-weight:400;color:#111;letter-spacing:-0.120px;white-space:nowrap;-webkit-text-stroke:0.25px;">12345678</span><span style="position:absolute;left:952.50px;top:533.00px;font-size:13px;line-height:13px;font-weight:400;color:#111;letter-spacing:-0.138px;white-space:nowrap;-webkit-text-stroke:0.25px;">26. 5. 2025 18:55</span><span style="position:absolute;left:1102.30px;top:533.00px;font-size:13px;line-height:13px;font-weight:400;color:#111;letter-spacing:-0.267px;white-space:nowrap;-webkit-text-stroke:0.25px;">Otevřeno</span><svg style="position:absolute;left:1344.5px;top:533.4px;" width="10" height="10" viewBox="0 0 10 10" fill="none"><path d="M1.2 1.4 L8.6 8.6 M8.6 1.4 L1.2 8.6" stroke="#d32a2a" stroke-width="2"/></svg><svg style="position:absolute;left:1509px;top:533.4px;" width="10" height="10" viewBox="0 0 10 10" fill="none"><path d="M1.2 1.4 L8.6 8.6 M8.6 1.4 L1.2 8.6" stroke="#d32a2a" stroke-width="2"/></svg><div style="position:absolute;left:348px;top:575.5px;width:1221px;height:1px;background:#e0e0e0"></div><svg style="position:absolute;left:358px;top:559.9px;" width="20" height="8" viewBox="0 0 20 8" fill="none"><circle cx="4.3" cy="4" r="1.9" stroke="#1f6db0" stroke-width="1.2"/><circle cx="10" cy="4" r="1.9" stroke="#1f6db0" stroke-width="1.2"/><circle cx="15.8" cy="4" r="1.9" stroke="#1f6db0" stroke-width="1.2"/></svg><svg style="position:absolute;left:385px;top:554.9px;" width="18" height="18" viewBox="0 0 18 18" fill="none"><circle cx="9" cy="9" r="7.5" stroke="#1f6db0" stroke-width="1.2"/><circle cx="8.7" cy="5.2" r="0.8" fill="#1f6db0"/><path d="M7.5 8.3 Q8.6 7.9 8.5 9.4 L8.3 11.2 Q8.4 12.7 10.3 12.5" stroke="#1f6db0" stroke-width="1.1" fill="none"/></svg><span style="position:absolute;left:422.00px;top:558.00px;font-size:13px;line-height:13px;font-weight:400;color:#111;letter-spacing:-0.380px;white-space:nowrap;-webkit-text-stroke:0.25px;">007</span><span style="position:absolute;left:502.50px;top:558.00px;font-size:13px;line-height:13px;font-weight:400;color:#111;letter-spacing:-0.156px;white-space:nowrap;-webkit-text-stroke:0.25px;">Dodavatel - školení 8</span><span style="position:absolute;left:852.50px;top:558.00px;font-size:13px;line-height:13px;font-weight:400;color:#111;letter-spacing:-0.120px;white-space:nowrap;-webkit-text-stroke:0.25px;">12345678</span><span style="position:absolute;left:952.50px;top:558.00px;font-size:13px;line-height:13px;font-weight:400;color:#111;letter-spacing:-0.138px;white-space:nowrap;-webkit-text-stroke:0.25px;">26. 5. 2025 18:56</span><span style="position:absolute;left:1102.30px;top:558.00px;font-size:13px;line-height:13px;font-weight:400;color:#111;letter-spacing:-0.267px;white-space:nowrap;-webkit-text-stroke:0.25px;">Otevřeno</span><svg style="position:absolute;left:1344.5px;top:558.4px;" width="10" height="10" viewBox="0 0 10 10" fill="none"><path d="M1.2 1.4 L8.6 8.6 M8.6 1.4 L1.2 8.6" stroke="#d32a2a" stroke-width="2"/></svg><svg style="position:absolute;left:1509px;top:558.4px;" width="10" height="10" viewBox="0 0 10 10" fill="none"><path d="M1.2 1.4 L8.6 8.6 M8.6 1.4 L1.2 8.6" stroke="#d32a2a" stroke-width="2"/></svg><div style="position:absolute;left:348px;top:600.5px;width:1221px;height:1px;background:#e0e0e0"></div><svg style="position:absolute;left:358px;top:584.9px;" width="20" height="8" viewBox="0 0 20 8" fill="none"><circle cx="4.3" cy="4" r="1.9" stroke="#1f6db0" stroke-width="1.2"/><circle cx="10" cy="4" r="1.9" stroke="#1f6db0" stroke-width="1.2"/><circle cx="15.8" cy="4" r="1.9" stroke="#1f6db0" stroke-width="1.2"/></svg><svg style="position:absolute;left:385px;top:579.9px;" width="18" height="18" viewBox="0 0 18 18" fill="none"><circle cx="9" cy="9" r="7.5" stroke="#1f6db0" stroke-width="1.2"/><circle cx="8.7" cy="5.2" r="0.8" fill="#1f6db0"/><path d="M7.5 8.3 Q8.6 7.9 8.5 9.4 L8.3 11.2 Q8.4 12.7 10.3 12.5" stroke="#1f6db0" stroke-width="1.1" fill="none"/></svg><span style="position:absolute;left:422.00px;top:583.00px;font-size:13px;line-height:13px;font-weight:400;color:#111;letter-spacing:-0.380px;white-space:nowrap;-webkit-text-stroke:0.25px;">008</span><span style="position:absolute;left:502.50px;top:583.00px;font-size:13px;line-height:13px;font-weight:400;color:#111;letter-spacing:-0.156px;white-space:nowrap;-webkit-text-stroke:0.25px;">Dodavatel - školení 9</span><span style="position:absolute;left:852.50px;top:583.00px;font-size:13px;line-height:13px;font-weight:400;color:#111;letter-spacing:-0.120px;white-space:nowrap;-webkit-text-stroke:0.25px;">12345678</span><span style="position:absolute;left:952.50px;top:583.00px;font-size:13px;line-height:13px;font-weight:400;color:#111;letter-spacing:-0.138px;white-space:nowrap;-webkit-text-stroke:0.25px;">26. 5. 2025 18:57</span><span style="position:absolute;left:1102.30px;top:583.00px;font-size:13px;line-height:13px;font-weight:400;color:#111;letter-spacing:-0.267px;white-space:nowrap;-webkit-text-stroke:0.25px;">Otevřeno</span><svg style="position:absolute;left:1344.5px;top:583.4px;" width="10" height="10" viewBox="0 0 10 10" fill="none"><path d="M1.2 1.4 L8.6 8.6 M8.6 1.4 L1.2 8.6" stroke="#d32a2a" stroke-width="2"/></svg><svg style="position:absolute;left:1508px;top:583.4px;" width="12" height="10" viewBox="0 0 12 10" fill="none"><path d="M0.8 5.8 L3.8 8.6 L10.6 1.4" stroke="#36b24a" stroke-width="2"/></svg><div style="position:absolute;left:348px;top:625.5px;width:1221px;height:1px;background:#e0e0e0"></div><svg style="position:absolute;left:358px;top:609.9px;" width="20" height="8" viewBox="0 0 20 8" fill="none"><circle cx="4.3" cy="4" r="1.9" stroke="#1f6db0" stroke-width="1.2"/><circle cx="10" cy="4" r="1.9" stroke="#1f6db0" stroke-width="1.2"/><circle cx="15.8" cy="4" r="1.9" stroke="#1f6db0" stroke-width="1.2"/></svg><svg style="position:absolute;left:385px;top:604.9px;" width="18" height="18" viewBox="0 0 18 18" fill="none"><circle cx="9" cy="9" r="7.5" stroke="#1f6db0" stroke-width="1.2"/><circle cx="8.7" cy="5.2" r="0.8" fill="#1f6db0"/><path d="M7.5 8.3 Q8.6 7.9 8.5 9.4 L8.3 11.2 Q8.4 12.7 10.3 12.5" stroke="#1f6db0" stroke-width="1.1" fill="none"/></svg><span style="position:absolute;left:422.00px;top:608.00px;font-size:13px;line-height:13px;font-weight:400;color:#111;letter-spacing:-0.380px;white-space:nowrap;-webkit-text-stroke:0.25px;">009</span><span style="position:absolute;left:502.50px;top:608.00px;font-size:13px;line-height:13px;font-weight:400;color:#111;letter-spacing:-0.156px;white-space:nowrap;-webkit-text-stroke:0.25px;">Dodavatel - školení 4</span><span style="position:absolute;left:852.50px;top:608.00px;font-size:13px;line-height:13px;font-weight:400;color:#111;letter-spacing:-0.120px;white-space:nowrap;-webkit-text-stroke:0.25px;">12345678</span><span style="position:absolute;left:952.50px;top:608.00px;font-size:13px;line-height:13px;font-weight:400;color:#111;letter-spacing:-0.138px;white-space:nowrap;-webkit-text-stroke:0.25px;">26. 5. 2025 19:00</span><span style="position:absolute;left:1102.30px;top:608.00px;font-size:13px;line-height:13px;font-weight:400;color:#111;letter-spacing:-0.237px;white-space:nowrap;-webkit-text-stroke:0.25px;">Podána po lhůtě</span><svg style="position:absolute;left:1344.5px;top:608.4px;" width="10" height="10" viewBox="0 0 10 10" fill="none"><path d="M1.2 1.4 L8.6 8.6 M8.6 1.4 L1.2 8.6" stroke="#d32a2a" stroke-width="2"/></svg><svg style="position:absolute;left:1509px;top:608.4px;" width="10" height="10" viewBox="0 0 10 10" fill="none"><path d="M1.2 1.4 L8.6 8.6 M8.6 1.4 L1.2 8.6" stroke="#d32a2a" stroke-width="2"/></svg><svg style="position:absolute;left:358px;top:634.9px;" width="20" height="8" viewBox="0 0 20 8" fill="none"><circle cx="4.3" cy="4" r="1.9" stroke="#1f6db0" stroke-width="1.2"/><circle cx="10" cy="4" r="1.9" stroke="#1f6db0" stroke-width="1.2"/><circle cx="15.8" cy="4" r="1.9" stroke="#1f6db0" stroke-width="1.2"/></svg><svg style="position:absolute;left:385px;top:629.9px;" width="18" height="18" viewBox="0 0 18 18" fill="none"><circle cx="9" cy="9" r="7.5" stroke="#1f6db0" stroke-width="1.2"/><circle cx="8.7" cy="5.2" r="0.8" fill="#1f6db0"/><path d="M7.5 8.3 Q8.6 7.9 8.5 9.4 L8.3 11.2 Q8.4 12.7 10.3 12.5" stroke="#1f6db0" stroke-width="1.1" fill="none"/></svg><span style="position:absolute;left:422.00px;top:633.00px;font-size:13px;line-height:13px;font-weight:400;color:#111;letter-spacing:-0.380px;white-space:nowrap;-webkit-text-stroke:0.25px;">010</span><span style="position:absolute;left:502.50px;top:633.00px;font-size:13px;line-height:13px;font-weight:400;color:#111;letter-spacing:-0.156px;white-space:nowrap;-webkit-text-stroke:0.25px;">Dodavatel - školení 6</span><span style="position:absolute;left:852.50px;top:633.00px;font-size:13px;line-height:13px;font-weight:400;color:#111;letter-spacing:-0.120px;white-space:nowrap;-webkit-text-stroke:0.25px;">45359326</span><span style="position:absolute;left:952.50px;top:633.00px;font-size:13px;line-height:13px;font-weight:400;color:#111;letter-spacing:-0.138px;white-space:nowrap;-webkit-text-stroke:0.25px;">26. 5. 2025 18:57</span><span style="position:absolute;left:1102.30px;top:633.00px;font-size:13px;line-height:13px;font-weight:400;color:#111;letter-spacing:-0.267px;white-space:nowrap;-webkit-text-stroke:0.25px;">Otevřeno</span><svg style="position:absolute;left:1343.5px;top:633.4px;" width="12" height="10" viewBox="0 0 12 10" fill="none"><path d="M0.8 5.8 L3.8 8.6 L10.6 1.4" stroke="#36b24a" stroke-width="2"/></svg><svg style="position:absolute;left:1509px;top:633.4px;" width="10" height="10" viewBox="0 0 10 10" fill="none"><path d="M1.2 1.4 L8.6 8.6 M8.6 1.4 L1.2 8.6" stroke="#d32a2a" stroke-width="2"/></svg><div style="position:absolute;left:1512px;top:368px;width:57px;height:284px;background:linear-gradient(90deg,rgba(0,0,0,0),rgba(0,0,0,.075));border-bottom-right-radius:7px"></div></div><div style="position:absolute;left:330px;top:685px;width:1258px;height:460px;background:#fff;box-shadow:1px 1px 4px rgba(0,0,0,.12);z-index:5"></div><div style="position:absolute;left:0;top:0;width:1919px;height:1133px;z-index:15"><span style="position:absolute;left:342.00px;top:701.41px;font-size:17px;line-height:17px;font-weight:700;color:#333;letter-spacing:-0.247px;white-space:nowrap;">Žádost o účast</span><div style="position:absolute;left:330px;top:726px;width:1258px;height:3px;background:#1a6db0"></div><span style="position:absolute;left:731.70px;top:750.70px;font-size:13px;line-height:13px;font-weight:400;color:#555;letter-spacing:-0.029px;white-space:nowrap;-webkit-text-stroke:0.25px;">Lhůta:</span><div style="position:absolute;left:778px;top:749.5px;width:438px;height:20px;background:#f2f2f2;border:1px solid #cfcfcf;border-radius:4px;box-sizing:border-box"></div><span style="position:absolute;left:783.00px;top:753.00px;font-size:13px;line-height:13px;font-weight:700;color:#111;letter-spacing:-0.006px;white-space:nowrap;">27. 5. 2025</span><svg style="position:absolute;left:990.5px;top:753.5px;" width="13" height="13" viewBox="0 0 13 13" fill="none"><rect x="0.6" y="1.6" width="11.3" height="10.4" rx="0.8" stroke="#8a8a8a" stroke-width="1"/><path d="M0.6 4.3 H11.9 M3.3 0.3 V2.6 M9.2 0.3 V2.6" stroke="#8a8a8a" stroke-width="1"/></svg><span style="position:absolute;left:1011.80px;top:753.00px;font-size:13px;line-height:13px;font-weight:700;color:#111;letter-spacing:-0.437px;white-space:nowrap;">06:20</span><span style="position:absolute;left:641.70px;top:792.00px;font-size:13px;line-height:13px;font-weight:400;color:#555;letter-spacing:-0.228px;white-space:nowrap;-webkit-text-stroke:0.25px;">Datum a čas otevírání:</span><div style="position:absolute;left:778px;top:790.5px;width:438px;height:20px;background:#f2f2f2;border:1px solid #cfcfcf;border-radius:4px;box-sizing:border-box"></div><span style="position:absolute;left:783.00px;top:794.00px;font-size:13px;line-height:13px;font-weight:700;color:#111;letter-spacing:-0.006px;white-space:nowrap;">27. 5. 2025</span><svg style="position:absolute;left:990.5px;top:794.5px;" width="13" height="13" viewBox="0 0 13 13" fill="none"><rect x="0.6" y="1.6" width="11.3" height="10.4" rx="0.8" stroke="#8a8a8a" stroke-width="1"/><path d="M0.6 4.3 H11.9 M3.3 0.3 V2.6 M9.2 0.3 V2.6" stroke="#8a8a8a" stroke-width="1"/></svg><span style="position:absolute;left:1011.80px;top:794.00px;font-size:13px;line-height:13px;font-weight:700;color:#111;letter-spacing:-0.437px;white-space:nowrap;">06:20</span><div style="position:absolute;left:778px;top:832px;width:438px;height:20px;background:#fff;border:1px solid #d9d9d9;border-radius:5px;box-sizing:border-box;box-shadow:0 1px 2px rgba(0,0,0,.12)"></div><span style="position:absolute;left:871.80px;top:836.20px;font-size:13px;line-height:13px;font-weight:400;color:#1f6db0;letter-spacing:-0.279px;white-space:nowrap;-webkit-text-stroke:0.25px;">Odeslání výzvy k podání žádosti o účast v ZŘ</span><span style="position:absolute;left:345.70px;top:875.04px;font-size:14.6px;line-height:14.6px;font-weight:700;color:#333;letter-spacing:0.001px;white-space:nowrap;">Přehled podaných žádostí o účast</span><svg style="position:absolute;left:1148.5px;top:872.5px;" width="16" height="16" viewBox="0 0 16 16" fill="none"><path d="M8 1 V9.6 M4.7 6.5 L8 9.8 L11.3 6.5" stroke="#1f6db0" stroke-width="1.3" stroke-linecap="round"/><path d="M1 10.6 V13.8 Q1 14.9 2.1 14.9 H13.9 Q15 14.9 15 13.8 V10.6 Q11.8 12.6 8 12.6 Q4.2 12.6 1 10.6 Z" stroke="#1f6db0" stroke-width="1.3" stroke-linejoin="round"/></svg><span style="position:absolute;left:1168.90px;top:874.00px;font-size:13px;line-height:13px;font-weight:400;color:#1f6db0;letter-spacing:-0.052px;white-space:nowrap;-webkit-text-stroke:0.25px;">Soubory podaní najdete připravené ke stažení na formuláři dokumenty</span><div style="position:absolute;left:345px;top:897.5px;width:1228px;height:232.5px;border:3px solid #dcdde0;border-bottom-width:4px;border-radius:10px;box-sizing:border-box"></div><svg style="position:absolute;left:372px;top:911.5px;" width="18" height="18" viewBox="0 0 18 18" fill="none"><circle cx="9" cy="6.5" r="5.1" stroke="#1f6db0" stroke-width="1.2"/><path d="M5.2 10 L2.2 13.6 L4.7 13.9 L5.5 16.3 L7.6 11.9 M12.8 10 L15.8 13.6 L13.3 13.9 L12.5 16.3 L10.4 11.9" stroke="#1f6db0" stroke-width="1.2" stroke-linejoin="round"/></svg><div style="position:absolute;left:413px;top:911.2px;width:1.2px;height:17.299999999999955px;background:#1f6db0"></div><svg style="position:absolute;left:421px;top:912px;" width="17" height="17" viewBox="0 0 17 17" fill="none"><path d="M7.6 15.4 H2.4 Q1.4 15.4 1.4 14.4 V3.6 Q1.4 2.6 2.4 2.6 H4.6 Q5.2 0.6 7.5 0.6 Q9.8 0.6 10.4 2.6 H12.5 Q13.5 2.6 13.5 3.6 V6" stroke="#1f6db0" stroke-width="1.1"/>
<circle cx="7.5" cy="2.6" r="0.6" fill="#1f6db0"/>
<path d="M4.4 6.6 H7.8 M4.4 9.3 H6.6 M4.4 11.9 H5.8" stroke="#1f6db0" stroke-width="1.1"/>
<path d="M12.7 6.5 L13.9 8.6 L16.3 8.6 L15.1 10.8 L16.3 13 L13.9 13 L12.7 15.2 L11.5 13 L9.1 13 L10.3 10.8 L9.1 8.6 L11.5 8.6 Z" stroke="#1f6db0" stroke-width="1.1" stroke-linejoin="round"/>
<circle cx="12.7" cy="10.8" r="1.1" fill="#1f6db0"/></svg><span style="position:absolute;left:442.50px;top:914.00px;font-size:13px;line-height:13px;font-weight:400;color:#1f6db0;letter-spacing:-0.195px;white-space:nowrap;-webkit-text-stroke:0.25px;">Evidovat žádost o účast</span><div style="position:absolute;left:583px;top:911.2px;width:1.2px;height:17.299999999999955px;background:#1f6db0"></div><div style="position:absolute;left:581px;top:898.5px;width:135px;height:38px;border:1px solid #e0242c;box-sizing:border-box"></div><div style="position:absolute;left:584.2px;top:906px;width:130px;height:28px;background:#4cad50;border-radius:6px"></div><svg style="position:absolute;left:591px;top:912px;" width="17" height="17" viewBox="0 0 17 17" fill="none"><path d="M7.6 15.4 H2.4 Q1.4 15.4 1.4 14.4 V3.6 Q1.4 2.6 2.4 2.6 H4.6 Q5.2 0.6 7.5 0.6 Q9.8 0.6 10.4 2.6 H12.5 Q13.5 2.6 13.5 3.6 V5.8" stroke="#fff" stroke-width="1.1"/>
<circle cx="7.5" cy="2.6" r="0.6" fill="#fff"/>
<path d="M4.4 6.6 H7.8 M4.4 9.3 H6.6 M4.4 11.9 H5.8" stroke="#fff" stroke-width="1.1"/>
<circle cx="12.4" cy="11.6" r="4.1" stroke="#fff" stroke-width="1.1"/>
<path d="M10.2 11.6 H14.4 M12.6 9.9 L14.4 11.6 L12.6 13.3" stroke="#fff" stroke-width="1.1"/></svg><span style="position:absolute;left:611.80px;top:914.00px;font-size:13px;line-height:13px;font-weight:400;color:#fff;letter-spacing:-0.222px;white-space:nowrap;-webkit-text-stroke:0.25px;">Ukončit otevírání</span><svg style="position:absolute;left:720.5px;top:912px;" width="17" height="17" viewBox="0 0 17 17" fill="none"><path d="M7.6 15.4 H2.4 Q1.4 15.4 1.4 14.4 V3.6 Q1.4 2.6 2.4 2.6 H4.6 Q5.2 0.6 7.5 0.6 Q9.8 0.6 10.4 2.6 H12.5 Q13.5 2.6 13.5 3.6 V5.8" stroke="#1f6db0" stroke-width="1.1"/>
<circle cx="7.5" cy="2.6" r="0.6" fill="#1f6db0"/>
<path d="M4.4 6.6 H7.8 M4.4 9.3 H6.6 M4.4 11.9 H5.8" stroke="#1f6db0" stroke-width="1.1"/>
<circle cx="12.4" cy="11.6" r="4.1" stroke="#1f6db0" stroke-width="1.1"/>
<path d="M10.2 11.6 H14.4 M12.6 9.9 L14.4 11.6 L12.6 13.3" stroke="#1f6db0" stroke-width="1.1"/></svg><span style="position:absolute;left:741.30px;top:914.00px;font-size:13px;line-height:13px;font-weight:400;color:#1f6db0;letter-spacing:-0.116px;white-space:nowrap;-webkit-text-stroke:0.25px;">Stáhnout žádosti o účast</span><div style="position:absolute;left:888px;top:911.2px;width:1.2px;height:17.299999999999955px;background:#1f6db0"></div><svg style="position:absolute;left:897px;top:912px;" width="16" height="16" viewBox="0 0 16 16" fill="none"><path d="M4.3 5 V2.2 Q4.3 1.2 5.3 1.2 H10.7 Q11.7 1.2 11.7 2.2 V5" stroke="#1f6db0" stroke-width="1.2"/><path d="M4.3 12.6 H2 Q1 12.6 1 11.6 V6 Q1 5 2 5 H14 Q15 5 15 6 V11.6 Q15 12.6 14 12.6 H11.7" stroke="#1f6db0" stroke-width="1.2"/><rect x="4.3" y="9.4" width="7.4" height="5.8" stroke="#1f6db0" stroke-width="1.2"/><path d="M2.8 7 H3.8 M6 11.4 H10 M6 13.4 H9" stroke="#1f6db0" stroke-width="1"/></svg><svg style="position:absolute;left:916.5px;top:916px;" width="9" height="8" viewBox="0 0 9 8" fill="none"><path d="M1.55 1.55 H7.45 L4.5 6.45 Z" stroke="#1f6db0" stroke-width="1.1" stroke-linejoin="round"/></svg><div style="position:absolute;left:936px;top:911.2px;width:1.2px;height:17.299999999999955px;background:#1f6db0"></div><svg style="position:absolute;left:946px;top:911.5px;" width="15" height="17" viewBox="0 0 15 17" fill="none"><path d="M4.5 6 H2.5 Q1.5 6 1.5 7 V14.5 Q1.5 15.5 2.5 15.5 H12.5 Q13.5 15.5 13.5 14.5 V7 Q13.5 6 12.5 6 H10.5" stroke="#1f6db0" stroke-width="1.2"/><path d="M7.5 10.5 V1.3 M4.9 3.9 L7.5 1.3 L10.1 3.9" stroke="#1f6db0" stroke-width="1.2"/></svg><svg style="position:absolute;left:964.7px;top:916px;" width="9" height="8" viewBox="0 0 9 8" fill="none"><path d="M1.55 1.55 H7.45 L4.5 6.45 Z" stroke="#1f6db0" stroke-width="1.1" stroke-linejoin="round"/></svg><div style="position:absolute;left:984px;top:911.2px;width:1.2px;height:17.299999999999955px;background:#1f6db0"></div><svg style="position:absolute;left:1487.5px;top:911.5px;" width="17" height="17" viewBox="0 0 17 17" fill="none"><path d="M1.3 1.3 H14.7 Q15.6 1.3 15 2.6 Q14 5.5 10.5 6.8 Q9.7 7.1 9.7 8 V13.3 Q9.7 14.6 8.4 15.3 Q7.4 15.8 7.4 14.6 V8 Q7.4 7.1 6.6 6.8 Q2.5 5.5 1.5 2.6 Q1 1.3 1.3 1.3 Z" stroke="#1f6db0" stroke-width="1.1" stroke-linejoin="round"/></svg><div style="position:absolute;left:1511px;top:911.2px;width:1.2px;height:17.299999999999955px;background:#1f6db0"></div><svg style="position:absolute;left:1522.8px;top:916px;" width="9" height="8" viewBox="0 0 9 8" fill="none"><path d="M1.55 1.55 H7.45 L4.5 6.45 Z" stroke="#1f6db0" stroke-width="1.1" stroke-linejoin="round"/></svg><span style="position:absolute;left:1540.00px;top:916.20px;font-size:13px;line-height:13px;font-weight:400;color:#1f6db0;letter-spacing:-1.099px;white-space:nowrap;-webkit-text-stroke:0.25px;">MW</span><div style="position:absolute;left:1569px;top:911.2px;width:1.2px;height:17.299999999999955px;background:#1f6db0"></div><div style="position:absolute;left:348px;top:939.2px;width:1221px;height:37.299999999999955px;background:#f2f2f2;border-top:1px solid #e0e0e0;border-bottom:1px solid #d8d8d8;box-sizing:border-box"></div><div style="position:absolute;left:412.8px;top:939.2px;width:1px;height:37.299999999999955px;background:#dcdcdc"></div><div style="position:absolute;left:492.8px;top:939.2px;width:1px;height:37.299999999999955px;background:#dcdcdc"></div><div style="position:absolute;left:702.5px;top:939.2px;width:1px;height:37.299999999999955px;background:#dcdcdc"></div><div style="position:absolute;left:803.0px;top:939.2px;width:1px;height:37.299999999999955px;background:#dcdcdc"></div><div style="position:absolute;left:953.0px;top:939.2px;width:1px;height:37.299999999999955px;background:#dcdcdc"></div><div style="position:absolute;left:1103.0px;top:939.2px;width:1px;height:37.299999999999955px;background:#dcdcdc"></div><div style="position:absolute;left:1243.2px;top:939.2px;width:1px;height:37.299999999999955px;background:#dcdcdc"></div><div style="position:absolute;left:1383.1px;top:939.2px;width:1px;height:37.299999999999955px;background:#dcdcdc"></div><svg style="position:absolute;left:373px;top:950px;" width="16" height="16" viewBox="0 0 16 16" fill="none"><rect x="0.7" y="0.7" width="14.6" height="14.6" rx="1" stroke="#444" stroke-width="1.1"/><path d="M3.2 5.7 H12.8 M3.2 10.3 H12.8" stroke="#444" stroke-width="1"/><circle cx="10.8" cy="5.7" r="1.5" fill="#f2f2f2" stroke="#444" stroke-width="1"/><circle cx="5.2" cy="10.3" r="1.5" fill="#f2f2f2" stroke="#444" stroke-width="1"/></svg><span style="position:absolute;left:422.00px;top:950.00px;font-size:13px;line-height:13px;font-weight:400;color:#666;letter-spacing:-0.259px;white-space:nowrap;-webkit-text-stroke:0.25px;">Číslo</span><svg style="position:absolute;left:475.25px;top:953px;" width="9" height="8" viewBox="0 0 9 8" fill="none"><path d="M1.55 1.55 H7.45 L4.5 6.45 Z" stroke="#555" stroke-width="1.1" stroke-linejoin="round"/></svg><span style="position:absolute;left:502.30px;top:950.00px;font-size:13px;line-height:13px;font-weight:700;color:#111;letter-spacing:-0.567px;white-space:nowrap;">Název dodavatele</span><svg style="position:absolute;left:609px;top:950px;" width="13" height="13" viewBox="0 0 13 13" fill="none"><path d="M6.2 12.4 V1.2 M1 6.2 L6.2 1 L11.4 6.2" stroke="#111" stroke-width="1.25"/></svg><svg style="position:absolute;left:685.25px;top:953px;" width="9" height="8" viewBox="0 0 9 8" fill="none"><path d="M1.55 1.55 H7.45 L4.5 6.45 Z" stroke="#555" stroke-width="1.1" stroke-linejoin="round"/></svg><span style="position:absolute;left:712.00px;top:950.00px;font-size:13px;line-height:13px;font-weight:400;color:#666;letter-spacing:0.000px;white-space:nowrap;-webkit-text-stroke:0.25px;">IČO</span><svg style="position:absolute;left:785.25px;top:953px;" width="9" height="8" viewBox="0 0 9 8" fill="none"><path d="M1.55 1.55 H7.45 L4.5 6.45 Z" stroke="#555" stroke-width="1.1" stroke-linejoin="round"/></svg><span style="position:absolute;left:812.50px;top:950.00px;font-size:13px;line-height:13px;font-weight:400;color:#666;letter-spacing:-0.333px;white-space:nowrap;-webkit-text-stroke:0.25px;">Datum podání</span><svg style="position:absolute;left:935.25px;top:953px;" width="9" height="8" viewBox="0 0 9 8" fill="none"><path d="M1.55 1.55 H7.45 L4.5 6.45 Z" stroke="#555" stroke-width="1.1" stroke-linejoin="round"/></svg><span style="position:absolute;left:962.30px;top:950.00px;font-size:13px;line-height:13px;font-weight:400;color:#666;letter-spacing:0.000px;white-space:nowrap;-webkit-text-stroke:0.25px;">Stav</span><svg style="position:absolute;left:1085.25px;top:953px;" width="9" height="8" viewBox="0 0 9 8" fill="none"><path d="M1.55 1.55 H7.45 L4.5 6.45 Z" stroke="#555" stroke-width="1.1" stroke-linejoin="round"/></svg><span style="position:absolute;left:1112.30px;top:950.00px;font-size:13px;line-height:13px;font-weight:400;color:#666;letter-spacing:-0.288px;white-space:nowrap;-webkit-text-stroke:0.25px;">Podepsána</span><svg style="position:absolute;left:1225.7px;top:953px;" width="9" height="8" viewBox="0 0 9 8" fill="none"><path d="M1.55 1.55 H7.45 L4.5 6.45 Z" stroke="#555" stroke-width="1.1" stroke-linejoin="round"/></svg><span style="position:absolute;left:1252.40px;top:950.00px;font-size:13px;line-height:13px;font-weight:400;color:#666;letter-spacing:-0.129px;white-space:nowrap;-webkit-text-stroke:0.25px;">Listinná podoba</span><svg style="position:absolute;left:1366px;top:953px;" width="9" height="8" viewBox="0 0 9 8" fill="none"><path d="M1.55 1.55 H7.45 L4.5 6.45 Z" stroke="#555" stroke-width="1.1" stroke-linejoin="round"/></svg><span style="position:absolute;left:1392.30px;top:950.00px;font-size:13px;line-height:13px;font-weight:400;color:#666;letter-spacing:-0.308px;white-space:nowrap;-webkit-text-stroke:0.25px;">Označena jako nepodaná</span><svg style="position:absolute;left:1551.8px;top:953px;" width="9" height="8" viewBox="0 0 9 8" fill="none"><path d="M1.55 1.55 H7.45 L4.5 6.45 Z" stroke="#555" stroke-width="1.1" stroke-linejoin="round"/></svg><div style="position:absolute;left:348px;top:976px;width:1221px;height:25px;background:#c3d9f5;border-bottom:1px solid #93bde8;box-sizing:border-box"></div><svg style="position:absolute;left:358px;top:984.9px;" width="20" height="8" viewBox="0 0 20 8" fill="none"><circle cx="4.3" cy="4" r="1.9" stroke="#1f6db0" stroke-width="1.2"/><circle cx="10" cy="4" r="1.9" stroke="#1f6db0" stroke-width="1.2"/><circle cx="15.8" cy="4" r="1.9" stroke="#1f6db0" stroke-width="1.2"/></svg><svg style="position:absolute;left:385px;top:979.9px;" width="18" height="18" viewBox="0 0 18 18" fill="none"><circle cx="9" cy="9" r="7.5" stroke="#1f6db0" stroke-width="1.2"/><circle cx="8.7" cy="5.2" r="0.8" fill="#1f6db0"/><path d="M7.5 8.3 Q8.6 7.9 8.5 9.4 L8.3 11.2 Q8.4 12.7 10.3 12.5" stroke="#1f6db0" stroke-width="1.1" fill="none"/></svg><span style="position:absolute;left:422.00px;top:983.00px;font-size:13px;line-height:13px;font-weight:400;color:#111;letter-spacing:-0.380px;white-space:nowrap;-webkit-text-stroke:0.25px;">001</span><span style="position:absolute;left:502.30px;top:983.00px;font-size:13px;line-height:13px;font-weight:400;color:#111;letter-spacing:-0.156px;white-space:nowrap;-webkit-text-stroke:0.25px;">Dodavatel - školení 2</span><span style="position:absolute;left:712.00px;top:983.00px;font-size:13px;line-height:13px;font-weight:400;color:#111;letter-spacing:-0.120px;white-space:nowrap;-webkit-text-stroke:0.25px;">12345678</span><span style="position:absolute;left:812.50px;top:983.00px;font-size:13px;line-height:13px;font-weight:400;color:#111;letter-spacing:-0.219px;white-space:nowrap;-webkit-text-stroke:0.25px;">27. 5. 2025 6:12</span><span style="position:absolute;left:962.30px;top:983.00px;font-size:13px;line-height:13px;font-weight:400;color:#111;letter-spacing:-0.267px;white-space:nowrap;-webkit-text-stroke:0.25px;">Otevřena</span><svg style="position:absolute;left:1169.4px;top:983.4px;" width="10" height="10" viewBox="0 0 10 10" fill="none"><path d="M1.2 1.4 L8.6 8.6 M8.6 1.4 L1.2 8.6" stroke="#d32a2a" stroke-width="2"/></svg><svg style="position:absolute;left:1309.3px;top:983.4px;" width="10" height="10" viewBox="0 0 10 10" fill="none"><path d="M1.2 1.4 L8.6 8.6 M8.6 1.4 L1.2 8.6" stroke="#d32a2a" stroke-width="2"/></svg><svg style="position:absolute;left:1472.2px;top:983.4px;" width="10" height="10" viewBox="0 0 10 10" fill="none"><path d="M1.2 1.4 L8.6 8.6 M8.6 1.4 L1.2 8.6" stroke="#d32a2a" stroke-width="2"/></svg><div style="position:absolute;left:348px;top:1025.5px;width:1221px;height:1px;background:#e0e0e0"></div><svg style="position:absolute;left:358px;top:1009.9px;" width="20" height="8" viewBox="0 0 20 8" fill="none"><circle cx="4.3" cy="4" r="1.9" stroke="#1f6db0" stroke-width="1.2"/><circle cx="10" cy="4" r="1.9" stroke="#1f6db0" stroke-width="1.2"/><circle cx="15.8" cy="4" r="1.9" stroke="#1f6db0" stroke-width="1.2"/></svg><svg style="position:absolute;left:385px;top:1004.9px;" width="18" height="18" viewBox="0 0 18 18" fill="none"><circle cx="9" cy="9" r="7.5" stroke="#1f6db0" stroke-width="1.2"/><circle cx="8.7" cy="5.2" r="0.8" fill="#1f6db0"/><path d="M7.5 8.3 Q8.6 7.9 8.5 9.4 L8.3 11.2 Q8.4 12.7 10.3 12.5" stroke="#1f6db0" stroke-width="1.1" fill="none"/></svg><span style="position:absolute;left:422.00px;top:1008.00px;font-size:13px;line-height:13px;font-weight:400;color:#111;letter-spacing:-0.380px;white-space:nowrap;-webkit-text-stroke:0.25px;">002</span><span style="position:absolute;left:502.30px;top:1008.00px;font-size:13px;line-height:13px;font-weight:400;color:#111;letter-spacing:-0.156px;white-space:nowrap;-webkit-text-stroke:0.25px;">Dodavatel - školení 3</span><span style="position:absolute;left:712.00px;top:1008.00px;font-size:13px;line-height:13px;font-weight:400;color:#111;letter-spacing:-0.120px;white-space:nowrap;-webkit-text-stroke:0.25px;">12345678</span><span style="position:absolute;left:812.50px;top:1008.00px;font-size:13px;line-height:13px;font-weight:400;color:#111;letter-spacing:-0.219px;white-space:nowrap;-webkit-text-stroke:0.25px;">27. 5. 2025 6:13</span><span style="position:absolute;left:962.30px;top:1008.00px;font-size:13px;line-height:13px;font-weight:400;color:#111;letter-spacing:-0.267px;white-space:nowrap;-webkit-text-stroke:0.25px;">Otevřena</span><svg style="position:absolute;left:1169.4px;top:1008.4px;" width="10" height="10" viewBox="0 0 10 10" fill="none"><path d="M1.2 1.4 L8.6 8.6 M8.6 1.4 L1.2 8.6" stroke="#d32a2a" stroke-width="2"/></svg><svg style="position:absolute;left:1309.3px;top:1008.4px;" width="10" height="10" viewBox="0 0 10 10" fill="none"><path d="M1.2 1.4 L8.6 8.6 M8.6 1.4 L1.2 8.6" stroke="#d32a2a" stroke-width="2"/></svg><svg style="position:absolute;left:1472.2px;top:1008.4px;" width="10" height="10" viewBox="0 0 10 10" fill="none"><path d="M1.2 1.4 L8.6 8.6 M8.6 1.4 L1.2 8.6" stroke="#d32a2a" stroke-width="2"/></svg><div style="position:absolute;left:348px;top:1050.5px;width:1221px;height:1px;background:#e0e0e0"></div><svg style="position:absolute;left:358px;top:1034.9px;" width="20" height="8" viewBox="0 0 20 8" fill="none"><circle cx="4.3" cy="4" r="1.9" stroke="#1f6db0" stroke-width="1.2"/><circle cx="10" cy="4" r="1.9" stroke="#1f6db0" stroke-width="1.2"/><circle cx="15.8" cy="4" r="1.9" stroke="#1f6db0" stroke-width="1.2"/></svg><svg style="position:absolute;left:385px;top:1029.9px;" width="18" height="18" viewBox="0 0 18 18" fill="none"><circle cx="9" cy="9" r="7.5" stroke="#1f6db0" stroke-width="1.2"/><circle cx="8.7" cy="5.2" r="0.8" fill="#1f6db0"/><path d="M7.5 8.3 Q8.6 7.9 8.5 9.4 L8.3 11.2 Q8.4 12.7 10.3 12.5" stroke="#1f6db0" stroke-width="1.1" fill="none"/></svg><span style="position:absolute;left:422.00px;top:1033.00px;font-size:13px;line-height:13px;font-weight:400;color:#111;letter-spacing:-0.380px;white-space:nowrap;-webkit-text-stroke:0.25px;">004</span><span style="position:absolute;left:502.30px;top:1033.00px;font-size:13px;line-height:13px;font-weight:400;color:#111;letter-spacing:-0.156px;white-space:nowrap;-webkit-text-stroke:0.25px;">Dodavatel - školení 5</span><span style="position:absolute;left:712.00px;top:1033.00px;font-size:13px;line-height:13px;font-weight:400;color:#111;letter-spacing:-0.120px;white-space:nowrap;-webkit-text-stroke:0.25px;">12345678</span><span style="position:absolute;left:812.50px;top:1033.00px;font-size:13px;line-height:13px;font-weight:400;color:#111;letter-spacing:-0.219px;white-space:nowrap;-webkit-text-stroke:0.25px;">27. 5. 2025 6:15</span><span style="position:absolute;left:962.30px;top:1033.00px;font-size:13px;line-height:13px;font-weight:400;color:#111;letter-spacing:-0.267px;white-space:nowrap;-webkit-text-stroke:0.25px;">Otevřena</span><svg style="position:absolute;left:1169.4px;top:1033.4px;" width="10" height="10" viewBox="0 0 10 10" fill="none"><path d="M1.2 1.4 L8.6 8.6 M8.6 1.4 L1.2 8.6" stroke="#d32a2a" stroke-width="2"/></svg><svg style="position:absolute;left:1309.3px;top:1033.4px;" width="10" height="10" viewBox="0 0 10 10" fill="none"><path d="M1.2 1.4 L8.6 8.6 M8.6 1.4 L1.2 8.6" stroke="#d32a2a" stroke-width="2"/></svg><svg style="position:absolute;left:1471.2px;top:1033.4px;" width="12" height="10" viewBox="0 0 12 10" fill="none"><path d="M0.8 5.8 L3.8 8.6 L10.6 1.4" stroke="#36b24a" stroke-width="2"/></svg><div style="position:absolute;left:348px;top:1075.5px;width:1221px;height:1px;background:#e0e0e0"></div><svg style="position:absolute;left:358px;top:1059.9px;" width="20" height="8" viewBox="0 0 20 8" fill="none"><circle cx="4.3" cy="4" r="1.9" stroke="#1f6db0" stroke-width="1.2"/><circle cx="10" cy="4" r="1.9" stroke="#1f6db0" stroke-width="1.2"/><circle cx="15.8" cy="4" r="1.9" stroke="#1f6db0" stroke-width="1.2"/></svg><svg style="position:absolute;left:385px;top:1054.9px;" width="18" height="18" viewBox="0 0 18 18" fill="none"><circle cx="9" cy="9" r="7.5" stroke="#1f6db0" stroke-width="1.2"/><circle cx="8.7" cy="5.2" r="0.8" fill="#1f6db0"/><path d="M7.5 8.3 Q8.6 7.9 8.5 9.4 L8.3 11.2 Q8.4 12.7 10.3 12.5" stroke="#1f6db0" stroke-width="1.1" fill="none"/></svg><span style="position:absolute;left:422.00px;top:1058.00px;font-size:13px;line-height:13px;font-weight:400;color:#111;letter-spacing:-0.380px;white-space:nowrap;-webkit-text-stroke:0.25px;">003</span><span style="position:absolute;left:502.30px;top:1058.00px;font-size:13px;line-height:13px;font-weight:400;color:#111;letter-spacing:-0.156px;white-space:nowrap;-webkit-text-stroke:0.25px;">Dodavatel - školení 6</span><span style="position:absolute;left:712.00px;top:1058.00px;font-size:13px;line-height:13px;font-weight:400;color:#111;letter-spacing:-0.120px;white-space:nowrap;-webkit-text-stroke:0.25px;">45359326</span><span style="position:absolute;left:812.50px;top:1058.00px;font-size:13px;line-height:13px;font-weight:400;color:#111;letter-spacing:-0.219px;white-space:nowrap;-webkit-text-stroke:0.25px;">27. 5. 2025 6:14</span><span style="position:absolute;left:962.30px;top:1058.00px;font-size:13px;line-height:13px;font-weight:400;color:#111;letter-spacing:-0.267px;white-space:nowrap;-webkit-text-stroke:0.25px;">Otevřena</span><svg style="position:absolute;left:1169.4px;top:1058.4px;" width="10" height="10" viewBox="0 0 10 10" fill="none"><path d="M1.2 1.4 L8.6 8.6 M8.6 1.4 L1.2 8.6" stroke="#d32a2a" stroke-width="2"/></svg><svg style="position:absolute;left:1309.3px;top:1058.4px;" width="10" height="10" viewBox="0 0 10 10" fill="none"><path d="M1.2 1.4 L8.6 8.6 M8.6 1.4 L1.2 8.6" stroke="#d32a2a" stroke-width="2"/></svg><svg style="position:absolute;left:1472.2px;top:1058.4px;" width="10" height="10" viewBox="0 0 10 10" fill="none"><path d="M1.2 1.4 L8.6 8.6 M8.6 1.4 L1.2 8.6" stroke="#d32a2a" stroke-width="2"/></svg><div style="position:absolute;left:348px;top:1100.5px;width:1221px;height:1px;background:#e0e0e0"></div><svg style="position:absolute;left:358px;top:1084.9px;" width="20" height="8" viewBox="0 0 20 8" fill="none"><circle cx="4.3" cy="4" r="1.9" stroke="#1f6db0" stroke-width="1.2"/><circle cx="10" cy="4" r="1.9" stroke="#1f6db0" stroke-width="1.2"/><circle cx="15.8" cy="4" r="1.9" stroke="#1f6db0" stroke-width="1.2"/></svg><svg style="position:absolute;left:385px;top:1079.9px;" width="18" height="18" viewBox="0 0 18 18" fill="none"><circle cx="9" cy="9" r="7.5" stroke="#1f6db0" stroke-width="1.2"/><circle cx="8.7" cy="5.2" r="0.8" fill="#1f6db0"/><path d="M7.5 8.3 Q8.6 7.9 8.5 9.4 L8.3 11.2 Q8.4 12.7 10.3 12.5" stroke="#1f6db0" stroke-width="1.1" fill="none"/></svg><span style="position:absolute;left:422.00px;top:1083.00px;font-size:13px;line-height:13px;font-weight:400;color:#111;letter-spacing:-0.380px;white-space:nowrap;-webkit-text-stroke:0.25px;">005</span><span style="position:absolute;left:502.30px;top:1083.00px;font-size:13px;line-height:13px;font-weight:400;color:#111;letter-spacing:-0.156px;white-space:nowrap;-webkit-text-stroke:0.25px;">Dodavatel - školení 8</span><span style="position:absolute;left:712.00px;top:1083.00px;font-size:13px;line-height:13px;font-weight:400;color:#111;letter-spacing:-0.120px;white-space:nowrap;-webkit-text-stroke:0.25px;">12345678</span><span style="position:absolute;left:812.50px;top:1083.00px;font-size:13px;line-height:13px;font-weight:400;color:#111;letter-spacing:-0.219px;white-space:nowrap;-webkit-text-stroke:0.25px;">27. 5. 2025 6:16</span><span style="position:absolute;left:962.30px;top:1083.00px;font-size:13px;line-height:13px;font-weight:400;color:#111;letter-spacing:-0.267px;white-space:nowrap;-webkit-text-stroke:0.25px;">Otevřena</span><svg style="position:absolute;left:1169.4px;top:1083.4px;" width="10" height="10" viewBox="0 0 10 10" fill="none"><path d="M1.2 1.4 L8.6 8.6 M8.6 1.4 L1.2 8.6" stroke="#d32a2a" stroke-width="2"/></svg><svg style="position:absolute;left:1309.3px;top:1083.4px;" width="10" height="10" viewBox="0 0 10 10" fill="none"><path d="M1.2 1.4 L8.6 8.6 M8.6 1.4 L1.2 8.6" stroke="#d32a2a" stroke-width="2"/></svg><svg style="position:absolute;left:1472.2px;top:1083.4px;" width="10" height="10" viewBox="0 0 10 10" fill="none"><path d="M1.2 1.4 L8.6 8.6 M8.6 1.4 L1.2 8.6" stroke="#d32a2a" stroke-width="2"/></svg><svg style="position:absolute;left:358px;top:1109.9px;" width="20" height="8" viewBox="0 0 20 8" fill="none"><circle cx="4.3" cy="4" r="1.9" stroke="#1f6db0" stroke-width="1.2"/><circle cx="10" cy="4" r="1.9" stroke="#1f6db0" stroke-width="1.2"/><circle cx="15.8" cy="4" r="1.9" stroke="#1f6db0" stroke-width="1.2"/></svg><svg style="position:absolute;left:385px;top:1104.9px;" width="18" height="18" viewBox="0 0 18 18" fill="none"><circle cx="9" cy="9" r="7.5" stroke="#1f6db0" stroke-width="1.2"/><circle cx="8.7" cy="5.2" r="0.8" fill="#1f6db0"/><path d="M7.5 8.3 Q8.6 7.9 8.5 9.4 L8.3 11.2 Q8.4 12.7 10.3 12.5" stroke="#1f6db0" stroke-width="1.1" fill="none"/></svg><span style="position:absolute;left:422.00px;top:1108.00px;font-size:13px;line-height:13px;font-weight:400;color:#111;letter-spacing:-0.380px;white-space:nowrap;-webkit-text-stroke:0.25px;">006</span><span style="position:absolute;left:502.30px;top:1108.00px;font-size:13px;line-height:13px;font-weight:400;color:#111;letter-spacing:-0.156px;white-space:nowrap;-webkit-text-stroke:0.25px;">Dodavatel - školení 8</span><span style="position:absolute;left:712.00px;top:1108.00px;font-size:13px;line-height:13px;font-weight:400;color:#111;letter-spacing:-0.120px;white-space:nowrap;-webkit-text-stroke:0.25px;">12345678</span><span style="position:absolute;left:812.50px;top:1108.00px;font-size:13px;line-height:13px;font-weight:400;color:#111;letter-spacing:-0.219px;white-space:nowrap;-webkit-text-stroke:0.25px;">27. 5. 2025 6:19</span><span style="position:absolute;left:962.30px;top:1108.00px;font-size:13px;line-height:13px;font-weight:400;color:#111;letter-spacing:-0.233px;white-space:nowrap;-webkit-text-stroke:0.25px;">Otevření zaevidováno</span><svg style="position:absolute;left:1169.4px;top:1108.4px;" width="10" height="10" viewBox="0 0 10 10" fill="none"><path d="M1.2 1.4 L8.6 8.6 M8.6 1.4 L1.2 8.6" stroke="#d32a2a" stroke-width="2"/></svg><svg style="position:absolute;left:1308.3px;top:1108.4px;" width="12" height="10" viewBox="0 0 12 10" fill="none"><path d="M0.8 5.8 L3.8 8.6 L10.6 1.4" stroke="#36b24a" stroke-width="2"/></svg><svg style="position:absolute;left:1472.2px;top:1108.4px;" width="10" height="10" viewBox="0 0 10 10" fill="none"><path d="M1.2 1.4 L8.6 8.6 M8.6 1.4 L1.2 8.6" stroke="#d32a2a" stroke-width="2"/></svg></div>
</body></html>
